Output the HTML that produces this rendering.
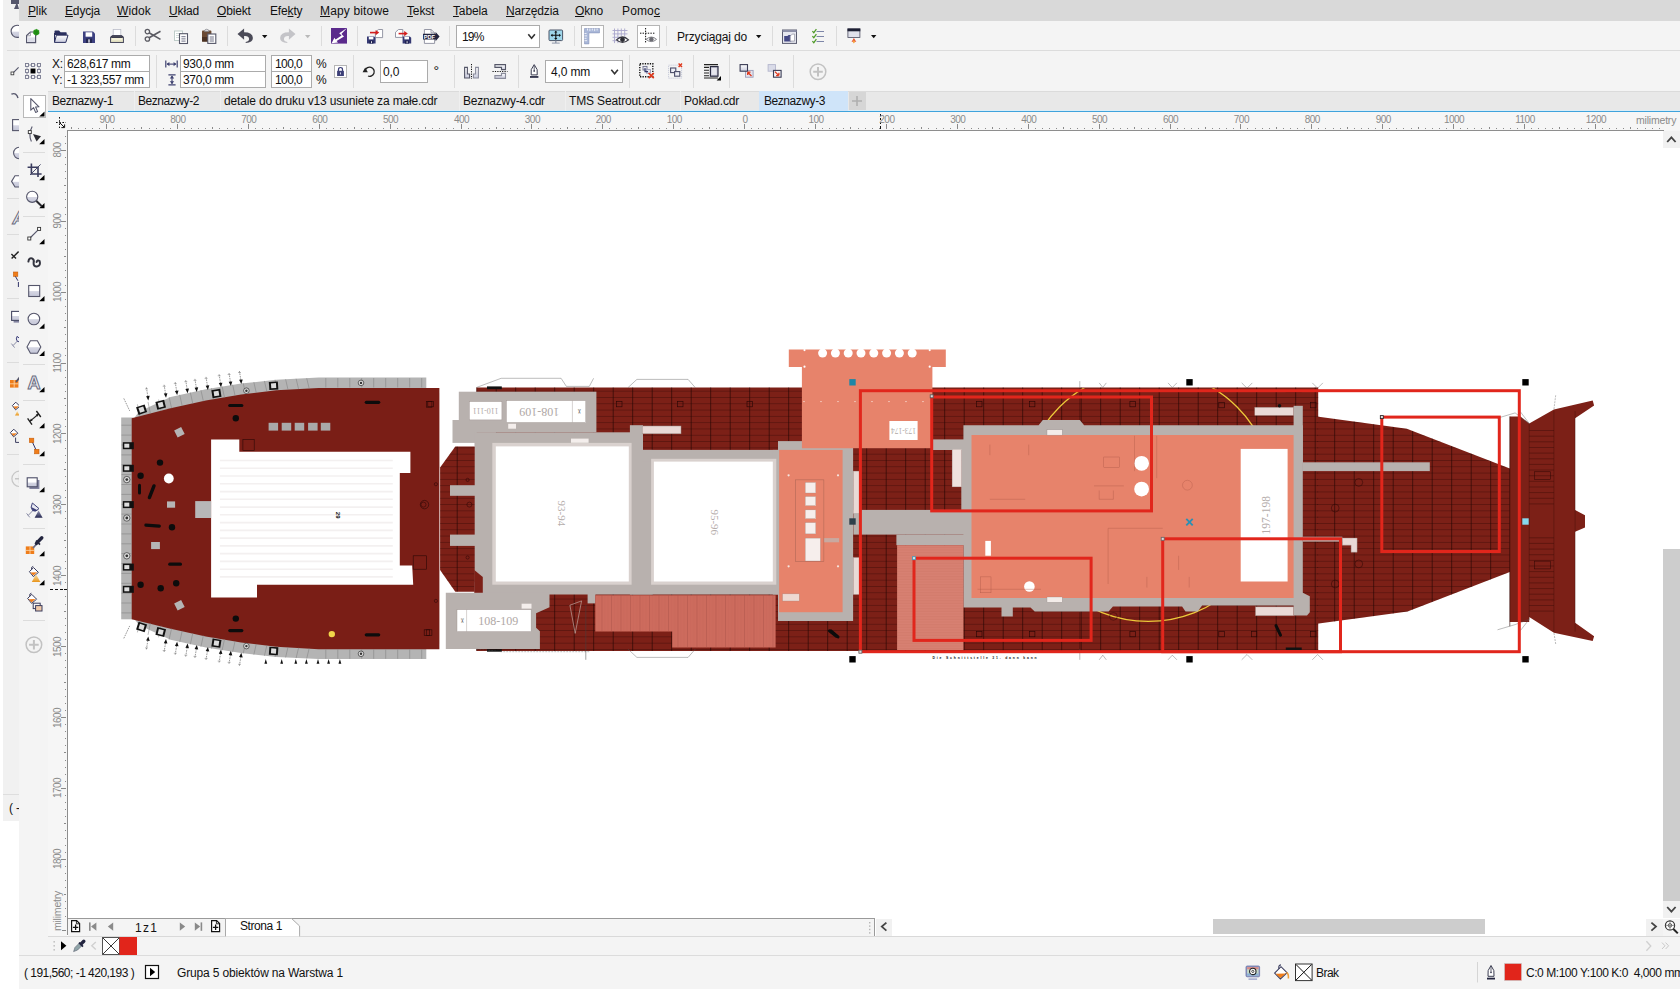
<!DOCTYPE html>
<html lang="pl">
<head>
<meta charset="utf-8">
<title>CorelDRAW - Beznazwy-3</title>
<style>
html,body{margin:0;padding:0;}
body{width:1680px;height:992px;overflow:hidden;background:#fff;position:relative;
 font-family:"Liberation Sans",sans-serif;font-size:12px;color:#111;}
.abs{position:absolute;}
.t{position:absolute;white-space:nowrap;line-height:14px;height:14px;letter-spacing:-0.15px;}
.box{position:absolute;background:#fff;border:1px solid #ababab;box-sizing:border-box;}
.vsep{position:absolute;width:1px;background:#dcdcdc;}
.hsep{position:absolute;height:1px;background:#dcdcdc;}
.rl{position:absolute;font-size:10px;color:#8a8a8a;line-height:10px;letter-spacing:-0.55px;}
svg{position:absolute;overflow:visible;}
u{text-decoration:underline;text-underline-offset:1px;}
</style>
</head>
<body>
<!-- left background strip (window behind) -->
<div class="abs" style="left:3px;top:0;width:16px;height:821px;background:#f1f1f1;"></div>
<div class="abs" style="left:3px;top:794px;width:16px;height:1px;background:#dedede;"></div>
<div class="t" style="left:9px;top:801px;">( -</div>

<!-- menu bar -->
<div class="abs" style="left:19px;top:0;width:1661px;height:21px;background:#d9d9d9;"></div>
<!-- toolbars bg -->
<div class="abs" style="left:19px;top:21px;width:1661px;height:70px;background:#f4f4f4;"></div>
<div class="hsep" style="left:19px;top:50px;width:1661px;"></div>
<!-- toolbox bg -->
<div class="abs" style="left:19px;top:91px;width:29px;height:898px;background:#f4f4f4;"></div>
<!-- tab strip -->
<div class="abs" style="left:48px;top:91px;width:1632px;height:20px;background:#e8e8e8;border-top:1px solid #dbdbdb;box-sizing:border-box;"></div>
<div class="abs" style="left:48px;top:110px;width:1632px;height:1px;background:#d9edf7;"></div>
<div class="abs" style="left:48px;top:111px;width:1632px;height:1px;background:#3fa3dc;"></div>
<!-- rulers -->
<div class="abs" style="left:48px;top:112px;width:1632px;height:19px;background:#f6f6f6;"></div>
<div class="abs" style="left:48px;top:112px;width:20px;height:806px;background:#f6f6f6;"></div>
<!-- canvas -->
<div class="abs" style="left:67px;top:130px;width:1597px;height:789px;background:#fff;border-left:1px solid #8e8e8e;border-top:1px solid #8e8e8e;box-sizing:border-box;"></div>
<div class="abs" style="left:67px;top:918px;width:808px;height:1px;background:#9a9a9a;"></div>
<!-- right scrollbar -->
<div class="abs" style="left:1663px;top:131px;width:17px;height:787px;background:#fff;"></div>
<div class="abs" style="left:1663px;top:549px;width:17px;height:352px;background:#cdcdcd;"></div>
<div class="abs" style="left:1663px;top:131px;width:17px;height:17px;background:#f1f1f1;"></div>
<div class="abs" style="left:1663px;top:901px;width:17px;height:17px;background:#f1f1f1;"></div>
<!-- bottom nav bar -->
<div class="abs" style="left:48px;top:919px;width:1632px;height:17px;background:#fff;"></div>
<div class="abs" style="left:68px;top:919px;width:806px;height:17px;background:#f4f4f4;"></div>
<div class="abs" style="left:48px;top:918px;width:19px;height:18px;background:#f6f6f6;"></div><div class="abs" style="left:67px;top:918px;width:1px;height:17px;background:#8e8e8e;"></div><div class="abs" style="left:62px;top:930px;width:4px;height:1px;background:#8a8a8a;"></div>
<div class="abs" style="left:874px;top:919px;width:1px;height:17px;background:#9a9a9a;"></div>
<div class="abs" style="left:876px;top:919px;width:16px;height:17px;background:#f1f1f1;"></div>
<div class="abs" style="left:1213px;top:919px;width:272px;height:15px;background:#cdcdcd;"></div>
<div class="abs" style="left:1646px;top:919px;width:17px;height:17px;background:#f1f1f1;"></div>
<div class="abs" style="left:1663px;top:919px;width:17px;height:17px;background:#f4f4f4;"></div>
<div class="abs" style="left:48px;top:936px;width:1632px;height:1px;background:#d9d9d9;"></div>
<!-- palette row -->
<div class="abs" style="left:48px;top:937px;width:1632px;height:18px;background:#f4f4f4;"></div>
<div class="abs" style="left:19px;top:955px;width:1661px;height:1px;background:#dcdcdc;"></div>
<!-- status bar -->
<div class="abs" style="left:19px;top:956px;width:1661px;height:33px;background:#f4f4f4;"></div>
<!-- menu items -->
<div class="t" style="left:28px;top:4px;"><u>P</u>lik</div>
<div class="t" style="left:65px;top:4px;"><u>E</u>dycja</div>
<div class="t" style="letter-spacing:0.13px;left:117px;top:4px;"><u>W</u>idok</div>
<div class="t" style="left:169px;top:4px;"><u>U</u>kład</div>
<div class="t" style="left:217px;top:4px;"><u>O</u>biekt</div>
<div class="t" style="left:270px;top:4px;">Efe<u>k</u>ty</div>
<div class="t" style="letter-spacing:0.15px;left:320px;top:4px;"><u>M</u>apy bitowe</div>
<div class="t" style="left:407px;top:4px;"><u>T</u>ekst</div>
<div class="t" style="left:453px;top:4px;"><u>T</u>abela</div>
<div class="t" style="left:506px;top:4px;"><u>N</u>arzędzia</div>
<div class="t" style="left:575px;top:4px;"><u>O</u>kno</div>
<div class="t" style="letter-spacing:0.13px;left:622px;top:4px;">Pomo<u>c</u></div>

<!-- tabs -->
<div class="abs" style="left:759px;top:91px;width:89px;height:20px;background:#cfe4f9;"></div>
<div class="abs" style="left:849px;top:92px;width:17px;height:18px;background:#d6d6d6;"></div>
<div class="vsep" style="left:134px;top:91px;height:20px;background:#efefef;"></div>
<div class="vsep" style="left:220px;top:91px;height:20px;background:#efefef;"></div>
<div class="vsep" style="left:459px;top:91px;height:20px;background:#efefef;"></div>
<div class="vsep" style="left:565px;top:91px;height:20px;background:#efefef;"></div>
<div class="vsep" style="left:680px;top:91px;height:20px;background:#efefef;"></div>
<div class="t" id="tab1" style="letter-spacing:-0.44px;left:52px;top:94px;">Beznazwy-1</div>
<div class="t" id="tab2" style="letter-spacing:-0.44px;left:138px;top:94px;">Beznazwy-2</div>
<div class="t" id="tab3" style="left:224px;top:94px;">detale do druku v13 usuniete za małe.cdr</div>
<div class="t" id="tab4" style="letter-spacing:-0.25px;left:463px;top:94px;">Beznazwy-4.cdr</div>
<div class="t" id="tab5" style="left:569px;top:94px;">TMS Seatrout.cdr</div>
<div class="t" id="tab6" style="left:684px;top:94px;">Pokład.cdr</div>
<div class="t" id="tab7" style="letter-spacing:-0.44px;left:764px;top:94px;">Beznazwy-3</div>

<!-- standard toolbar widgets -->
<div class="box" style="left:456px;top:25px;width:84px;height:23px;"></div>
<div class="t" style="letter-spacing:-0.85px;left:462px;top:30px;">19%</div>
<div class="t" style="left:677px;top:30px;">Przyciągaj do</div>

<!-- property bar -->
<div class="t" style="left:52px;top:57px;">X:</div>
<div class="t" style="left:52px;top:73px;">Y:</div>
<div class="box" style="left:64px;top:55px;width:86px;height:17px;"></div>
<div class="box" style="left:64px;top:71px;width:86px;height:17px;"></div>
<div class="t" style="letter-spacing:-0.33px;left:67px;top:57px;">628,617 mm</div>
<div class="t" style="letter-spacing:-0.3px;left:67px;top:73px;">-1 323,557 mm</div>
<div class="box" style="left:180px;top:55px;width:86px;height:17px;"></div>
<div class="box" style="left:180px;top:71px;width:86px;height:17px;"></div>
<div class="t" style="letter-spacing:-0.33px;left:183px;top:57px;">930,0 mm</div>
<div class="t" style="letter-spacing:-0.33px;left:183px;top:73px;">370,0 mm</div>
<div class="box" style="left:271px;top:55px;width:41px;height:17px;"></div>
<div class="box" style="left:271px;top:71px;width:41px;height:17px;"></div>
<div class="t" style="letter-spacing:-0.6px;left:275px;top:57px;">100,0</div>
<div class="t" style="letter-spacing:-0.6px;left:275px;top:73px;">100,0</div>
<div class="t" style="left:316px;top:57px;">%</div>
<div class="t" style="left:316px;top:73px;">%</div>
<div class="box" style="left:380px;top:60px;width:48px;height:23px;"></div>
<div class="t" style="left:383px;top:65px;">0,0</div>
<div class="t" style="left:433.5px;top:64px;font-size:14px;">°</div>
<div class="box" style="left:545px;top:60px;width:78px;height:23px;"></div>
<div class="t" style="left:551px;top:65px;">4,0 mm</div>


<!-- status bar -->
<div class="t" style="letter-spacing:-0.52px;left:24px;top:966px;">( 191,560; -1 420,193 )</div>
<div class="t" style="left:177px;top:966px;">Grupa 5 obiektów na Warstwa 1</div>
<div class="t" style="letter-spacing:-0.55px;left:1316px;top:966px;">Brak</div>
<div class="t" style="letter-spacing:-0.45px;left:1526px;top:966px;">C:0 M:100 Y:100 K:0&nbsp; 4,000 mm</div>
<!-- rulers -->
<svg width="1680" height="992" style="left:0;top:0" shape-rendering="crispEdges">
<g fill="#8a8a8a"><rect x="71" y="127" width="1" height="2"/><rect x="78" y="128" width="1" height="1"/><rect x="85" y="128" width="1" height="1"/><rect x="92" y="128" width="1" height="1"/><rect x="99" y="128" width="1" height="1"/><rect x="106" y="124" width="1" height="5"/><rect x="113" y="128" width="1" height="1"/><rect x="120" y="128" width="1" height="1"/><rect x="127" y="128" width="1" height="1"/><rect x="134" y="128" width="1" height="1"/><rect x="141" y="127" width="1" height="2"/><rect x="149" y="128" width="1" height="1"/><rect x="156" y="128" width="1" height="1"/><rect x="163" y="128" width="1" height="1"/><rect x="170" y="128" width="1" height="1"/><rect x="177" y="124" width="1" height="5"/><rect x="184" y="128" width="1" height="1"/><rect x="191" y="128" width="1" height="1"/><rect x="198" y="128" width="1" height="1"/><rect x="205" y="128" width="1" height="1"/><rect x="212" y="127" width="1" height="2"/><rect x="219" y="128" width="1" height="1"/><rect x="227" y="128" width="1" height="1"/><rect x="234" y="128" width="1" height="1"/><rect x="241" y="128" width="1" height="1"/><rect x="248" y="124" width="1" height="5"/><rect x="255" y="128" width="1" height="1"/><rect x="262" y="128" width="1" height="1"/><rect x="269" y="128" width="1" height="1"/><rect x="276" y="128" width="1" height="1"/><rect x="283" y="127" width="1" height="2"/><rect x="290" y="128" width="1" height="1"/><rect x="297" y="128" width="1" height="1"/><rect x="305" y="128" width="1" height="1"/><rect x="312" y="128" width="1" height="1"/><rect x="319" y="124" width="1" height="5"/><rect x="326" y="128" width="1" height="1"/><rect x="333" y="128" width="1" height="1"/><rect x="340" y="128" width="1" height="1"/><rect x="347" y="128" width="1" height="1"/><rect x="354" y="127" width="1" height="2"/><rect x="361" y="128" width="1" height="1"/><rect x="368" y="128" width="1" height="1"/><rect x="375" y="128" width="1" height="1"/><rect x="383" y="128" width="1" height="1"/><rect x="390" y="124" width="1" height="5"/><rect x="397" y="128" width="1" height="1"/><rect x="404" y="128" width="1" height="1"/><rect x="411" y="128" width="1" height="1"/><rect x="418" y="128" width="1" height="1"/><rect x="425" y="127" width="1" height="2"/><rect x="432" y="128" width="1" height="1"/><rect x="439" y="128" width="1" height="1"/><rect x="446" y="128" width="1" height="1"/><rect x="453" y="128" width="1" height="1"/><rect x="461" y="124" width="1" height="5"/><rect x="468" y="128" width="1" height="1"/><rect x="475" y="128" width="1" height="1"/><rect x="482" y="128" width="1" height="1"/><rect x="489" y="128" width="1" height="1"/><rect x="496" y="127" width="1" height="2"/><rect x="503" y="128" width="1" height="1"/><rect x="510" y="128" width="1" height="1"/><rect x="517" y="128" width="1" height="1"/><rect x="524" y="128" width="1" height="1"/><rect x="531" y="124" width="1" height="5"/><rect x="538" y="128" width="1" height="1"/><rect x="546" y="128" width="1" height="1"/><rect x="553" y="128" width="1" height="1"/><rect x="560" y="128" width="1" height="1"/><rect x="567" y="127" width="1" height="2"/><rect x="574" y="128" width="1" height="1"/><rect x="581" y="128" width="1" height="1"/><rect x="588" y="128" width="1" height="1"/><rect x="595" y="128" width="1" height="1"/><rect x="602" y="124" width="1" height="5"/><rect x="609" y="128" width="1" height="1"/><rect x="616" y="128" width="1" height="1"/><rect x="624" y="128" width="1" height="1"/><rect x="631" y="128" width="1" height="1"/><rect x="638" y="127" width="1" height="2"/><rect x="645" y="128" width="1" height="1"/><rect x="652" y="128" width="1" height="1"/><rect x="659" y="128" width="1" height="1"/><rect x="666" y="128" width="1" height="1"/><rect x="673" y="124" width="1" height="5"/><rect x="680" y="128" width="1" height="1"/><rect x="687" y="128" width="1" height="1"/><rect x="694" y="128" width="1" height="1"/><rect x="702" y="128" width="1" height="1"/><rect x="709" y="127" width="1" height="2"/><rect x="716" y="128" width="1" height="1"/><rect x="723" y="128" width="1" height="1"/><rect x="730" y="128" width="1" height="1"/><rect x="737" y="128" width="1" height="1"/><rect x="744" y="124" width="1" height="5"/><rect x="751" y="128" width="1" height="1"/><rect x="758" y="128" width="1" height="1"/><rect x="765" y="128" width="1" height="1"/><rect x="772" y="128" width="1" height="1"/><rect x="780" y="127" width="1" height="2"/><rect x="787" y="128" width="1" height="1"/><rect x="794" y="128" width="1" height="1"/><rect x="801" y="128" width="1" height="1"/><rect x="808" y="128" width="1" height="1"/><rect x="815" y="124" width="1" height="5"/><rect x="822" y="128" width="1" height="1"/><rect x="829" y="128" width="1" height="1"/><rect x="836" y="128" width="1" height="1"/><rect x="843" y="128" width="1" height="1"/><rect x="850" y="127" width="1" height="2"/><rect x="858" y="128" width="1" height="1"/><rect x="865" y="128" width="1" height="1"/><rect x="872" y="128" width="1" height="1"/><rect x="879" y="128" width="1" height="1"/><rect x="886" y="124" width="1" height="5"/><rect x="893" y="128" width="1" height="1"/><rect x="900" y="128" width="1" height="1"/><rect x="907" y="128" width="1" height="1"/><rect x="914" y="128" width="1" height="1"/><rect x="921" y="127" width="1" height="2"/><rect x="928" y="128" width="1" height="1"/><rect x="936" y="128" width="1" height="1"/><rect x="943" y="128" width="1" height="1"/><rect x="950" y="128" width="1" height="1"/><rect x="957" y="124" width="1" height="5"/><rect x="964" y="128" width="1" height="1"/><rect x="971" y="128" width="1" height="1"/><rect x="978" y="128" width="1" height="1"/><rect x="985" y="128" width="1" height="1"/><rect x="992" y="127" width="1" height="2"/><rect x="999" y="128" width="1" height="1"/><rect x="1006" y="128" width="1" height="1"/><rect x="1014" y="128" width="1" height="1"/><rect x="1021" y="128" width="1" height="1"/><rect x="1028" y="124" width="1" height="5"/><rect x="1035" y="128" width="1" height="1"/><rect x="1042" y="128" width="1" height="1"/><rect x="1049" y="128" width="1" height="1"/><rect x="1056" y="128" width="1" height="1"/><rect x="1063" y="127" width="1" height="2"/><rect x="1070" y="128" width="1" height="1"/><rect x="1077" y="128" width="1" height="1"/><rect x="1084" y="128" width="1" height="1"/><rect x="1092" y="128" width="1" height="1"/><rect x="1099" y="124" width="1" height="5"/><rect x="1106" y="128" width="1" height="1"/><rect x="1113" y="128" width="1" height="1"/><rect x="1120" y="128" width="1" height="1"/><rect x="1127" y="128" width="1" height="1"/><rect x="1134" y="127" width="1" height="2"/><rect x="1141" y="128" width="1" height="1"/><rect x="1148" y="128" width="1" height="1"/><rect x="1155" y="128" width="1" height="1"/><rect x="1162" y="128" width="1" height="1"/><rect x="1170" y="124" width="1" height="5"/><rect x="1177" y="128" width="1" height="1"/><rect x="1184" y="128" width="1" height="1"/><rect x="1191" y="128" width="1" height="1"/><rect x="1198" y="128" width="1" height="1"/><rect x="1205" y="127" width="1" height="2"/><rect x="1212" y="128" width="1" height="1"/><rect x="1219" y="128" width="1" height="1"/><rect x="1226" y="128" width="1" height="1"/><rect x="1233" y="128" width="1" height="1"/><rect x="1240" y="124" width="1" height="5"/><rect x="1247" y="128" width="1" height="1"/><rect x="1255" y="128" width="1" height="1"/><rect x="1262" y="128" width="1" height="1"/><rect x="1269" y="128" width="1" height="1"/><rect x="1276" y="127" width="1" height="2"/><rect x="1283" y="128" width="1" height="1"/><rect x="1290" y="128" width="1" height="1"/><rect x="1297" y="128" width="1" height="1"/><rect x="1304" y="128" width="1" height="1"/><rect x="1311" y="124" width="1" height="5"/><rect x="1318" y="128" width="1" height="1"/><rect x="1325" y="128" width="1" height="1"/><rect x="1333" y="128" width="1" height="1"/><rect x="1340" y="128" width="1" height="1"/><rect x="1347" y="127" width="1" height="2"/><rect x="1354" y="128" width="1" height="1"/><rect x="1361" y="128" width="1" height="1"/><rect x="1368" y="128" width="1" height="1"/><rect x="1375" y="128" width="1" height="1"/><rect x="1382" y="124" width="1" height="5"/><rect x="1389" y="128" width="1" height="1"/><rect x="1396" y="128" width="1" height="1"/><rect x="1403" y="128" width="1" height="1"/><rect x="1411" y="128" width="1" height="1"/><rect x="1418" y="127" width="1" height="2"/><rect x="1425" y="128" width="1" height="1"/><rect x="1432" y="128" width="1" height="1"/><rect x="1439" y="128" width="1" height="1"/><rect x="1446" y="128" width="1" height="1"/><rect x="1453" y="124" width="1" height="5"/><rect x="1460" y="128" width="1" height="1"/><rect x="1467" y="128" width="1" height="1"/><rect x="1474" y="128" width="1" height="1"/><rect x="1481" y="128" width="1" height="1"/><rect x="1489" y="127" width="1" height="2"/><rect x="1496" y="128" width="1" height="1"/><rect x="1503" y="128" width="1" height="1"/><rect x="1510" y="128" width="1" height="1"/><rect x="1517" y="128" width="1" height="1"/><rect x="1524" y="124" width="1" height="5"/><rect x="1531" y="128" width="1" height="1"/><rect x="1538" y="128" width="1" height="1"/><rect x="1545" y="128" width="1" height="1"/><rect x="1552" y="128" width="1" height="1"/><rect x="1559" y="127" width="1" height="2"/><rect x="1567" y="128" width="1" height="1"/><rect x="1574" y="128" width="1" height="1"/><rect x="1581" y="128" width="1" height="1"/><rect x="1588" y="128" width="1" height="1"/><rect x="1595" y="124" width="1" height="5"/><rect x="1602" y="128" width="1" height="1"/><rect x="1609" y="128" width="1" height="1"/><rect x="1616" y="128" width="1" height="1"/><rect x="1623" y="128" width="1" height="1"/><rect x="1630" y="127" width="1" height="2"/><rect x="1637" y="128" width="1" height="1"/><rect x="1645" y="128" width="1" height="1"/><rect x="1652" y="128" width="1" height="1"/><rect x="1659" y="128" width="1" height="1"/><rect x="65" y="136" width="1" height="1"/><rect x="65" y="143" width="1" height="1"/><rect x="61" y="150" width="5" height="1"/><rect x="65" y="157" width="1" height="1"/><rect x="65" y="164" width="1" height="1"/><rect x="65" y="171" width="1" height="1"/><rect x="65" y="178" width="1" height="1"/><rect x="64" y="185" width="2" height="1"/><rect x="65" y="192" width="1" height="1"/><rect x="65" y="199" width="1" height="1"/><rect x="65" y="207" width="1" height="1"/><rect x="65" y="214" width="1" height="1"/><rect x="61" y="221" width="5" height="1"/><rect x="65" y="228" width="1" height="1"/><rect x="65" y="235" width="1" height="1"/><rect x="65" y="242" width="1" height="1"/><rect x="65" y="249" width="1" height="1"/><rect x="64" y="256" width="2" height="1"/><rect x="65" y="263" width="1" height="1"/><rect x="65" y="270" width="1" height="1"/><rect x="65" y="277" width="1" height="1"/><rect x="65" y="285" width="1" height="1"/><rect x="61" y="292" width="5" height="1"/><rect x="65" y="299" width="1" height="1"/><rect x="65" y="306" width="1" height="1"/><rect x="65" y="313" width="1" height="1"/><rect x="65" y="320" width="1" height="1"/><rect x="64" y="327" width="2" height="1"/><rect x="65" y="334" width="1" height="1"/><rect x="65" y="341" width="1" height="1"/><rect x="65" y="348" width="1" height="1"/><rect x="65" y="355" width="1" height="1"/><rect x="61" y="363" width="5" height="1"/><rect x="65" y="370" width="1" height="1"/><rect x="65" y="377" width="1" height="1"/><rect x="65" y="384" width="1" height="1"/><rect x="65" y="391" width="1" height="1"/><rect x="64" y="398" width="2" height="1"/><rect x="65" y="405" width="1" height="1"/><rect x="65" y="412" width="1" height="1"/><rect x="65" y="419" width="1" height="1"/><rect x="65" y="426" width="1" height="1"/><rect x="61" y="433" width="5" height="1"/><rect x="65" y="440" width="1" height="1"/><rect x="65" y="448" width="1" height="1"/><rect x="65" y="455" width="1" height="1"/><rect x="65" y="462" width="1" height="1"/><rect x="64" y="469" width="2" height="1"/><rect x="65" y="476" width="1" height="1"/><rect x="65" y="483" width="1" height="1"/><rect x="65" y="490" width="1" height="1"/><rect x="65" y="497" width="1" height="1"/><rect x="61" y="504" width="5" height="1"/><rect x="65" y="511" width="1" height="1"/><rect x="65" y="518" width="1" height="1"/><rect x="65" y="526" width="1" height="1"/><rect x="65" y="533" width="1" height="1"/><rect x="64" y="540" width="2" height="1"/><rect x="65" y="547" width="1" height="1"/><rect x="65" y="554" width="1" height="1"/><rect x="65" y="561" width="1" height="1"/><rect x="65" y="568" width="1" height="1"/><rect x="61" y="575" width="5" height="1"/><rect x="65" y="582" width="1" height="1"/><rect x="65" y="589" width="1" height="1"/><rect x="65" y="596" width="1" height="1"/><rect x="65" y="604" width="1" height="1"/><rect x="64" y="611" width="2" height="1"/><rect x="65" y="618" width="1" height="1"/><rect x="65" y="625" width="1" height="1"/><rect x="65" y="632" width="1" height="1"/><rect x="65" y="639" width="1" height="1"/><rect x="61" y="646" width="5" height="1"/><rect x="65" y="653" width="1" height="1"/><rect x="65" y="660" width="1" height="1"/><rect x="65" y="667" width="1" height="1"/><rect x="65" y="674" width="1" height="1"/><rect x="64" y="682" width="2" height="1"/><rect x="65" y="689" width="1" height="1"/><rect x="65" y="696" width="1" height="1"/><rect x="65" y="703" width="1" height="1"/><rect x="65" y="710" width="1" height="1"/><rect x="61" y="717" width="5" height="1"/><rect x="65" y="724" width="1" height="1"/><rect x="65" y="731" width="1" height="1"/><rect x="65" y="738" width="1" height="1"/><rect x="65" y="745" width="1" height="1"/><rect x="64" y="752" width="2" height="1"/><rect x="65" y="760" width="1" height="1"/><rect x="65" y="767" width="1" height="1"/><rect x="65" y="774" width="1" height="1"/><rect x="65" y="781" width="1" height="1"/><rect x="61" y="788" width="5" height="1"/><rect x="65" y="795" width="1" height="1"/><rect x="65" y="802" width="1" height="1"/><rect x="65" y="809" width="1" height="1"/><rect x="65" y="816" width="1" height="1"/><rect x="64" y="823" width="2" height="1"/><rect x="65" y="830" width="1" height="1"/><rect x="65" y="838" width="1" height="1"/><rect x="65" y="845" width="1" height="1"/><rect x="65" y="852" width="1" height="1"/><rect x="61" y="859" width="5" height="1"/><rect x="65" y="866" width="1" height="1"/><rect x="65" y="873" width="1" height="1"/><rect x="65" y="880" width="1" height="1"/><rect x="65" y="887" width="1" height="1"/><rect x="64" y="894" width="2" height="1"/><rect x="65" y="901" width="1" height="1"/><rect x="65" y="908" width="1" height="1"/><rect x="65" y="916" width="1" height="1"/></g>
<g fill="#111"><rect x="880" y="114" width="1" height="2"/><rect x="880" y="118" width="1" height="2"/><rect x="880" y="122" width="1" height="2"/><rect x="880" y="126" width="1" height="3"/>
<rect x="50" y="589" width="3" height="1"/><rect x="55" y="589" width="3" height="1"/><rect x="60" y="589" width="3" height="1"/><rect x="64" y="589" width="3" height="1"/></g>
</svg>
<div class="rl" style="left:87.0px;top:114.6px;width:40px;text-align:center;">900</div>
<div class="rl" style="left:157.9px;top:114.6px;width:40px;text-align:center;">800</div>
<div class="rl" style="left:228.8px;top:114.6px;width:40px;text-align:center;">700</div>
<div class="rl" style="left:299.7px;top:114.6px;width:40px;text-align:center;">600</div>
<div class="rl" style="left:370.6px;top:114.6px;width:40px;text-align:center;">500</div>
<div class="rl" style="left:441.5px;top:114.6px;width:40px;text-align:center;">400</div>
<div class="rl" style="left:512.4px;top:114.6px;width:40px;text-align:center;">300</div>
<div class="rl" style="left:583.3px;top:114.6px;width:40px;text-align:center;">200</div>
<div class="rl" style="left:654.2px;top:114.6px;width:40px;text-align:center;">100</div>
<div class="rl" style="left:725.1px;top:114.6px;width:40px;text-align:center;">0</div>
<div class="rl" style="left:796.0px;top:114.6px;width:40px;text-align:center;">100</div>
<div class="rl" style="left:866.9px;top:114.6px;width:40px;text-align:center;">200</div>
<div class="rl" style="left:937.8px;top:114.6px;width:40px;text-align:center;">300</div>
<div class="rl" style="left:1008.7px;top:114.6px;width:40px;text-align:center;">400</div>
<div class="rl" style="left:1079.6px;top:114.6px;width:40px;text-align:center;">500</div>
<div class="rl" style="left:1150.5px;top:114.6px;width:40px;text-align:center;">600</div>
<div class="rl" style="left:1221.4px;top:114.6px;width:40px;text-align:center;">700</div>
<div class="rl" style="left:1292.3px;top:114.6px;width:40px;text-align:center;">800</div>
<div class="rl" style="left:1363.2px;top:114.6px;width:40px;text-align:center;">900</div>
<div class="rl" style="left:1434.1px;top:114.6px;width:40px;text-align:center;">1000</div>
<div class="rl" style="left:1505.0px;top:114.6px;width:40px;text-align:center;">1100</div>
<div class="rl" style="left:1575.9px;top:114.6px;width:40px;text-align:center;">1200</div>
<div class="rl" style="left:1636px;top:115px;font-size:10.5px;letter-spacing:-0.2px;">milimetry</div>
<div class="rl" style="left:37.5px;top:145.3px;width:40px;text-align:center;transform:rotate(-90deg);">800</div>
<div class="rl" style="left:37.5px;top:216.2px;width:40px;text-align:center;transform:rotate(-90deg);">900</div>
<div class="rl" style="left:37.5px;top:287.1px;width:40px;text-align:center;transform:rotate(-90deg);">1000</div>
<div class="rl" style="left:37.5px;top:358.0px;width:40px;text-align:center;transform:rotate(-90deg);">1100</div>
<div class="rl" style="left:37.5px;top:428.9px;width:40px;text-align:center;transform:rotate(-90deg);">1200</div>
<div class="rl" style="left:37.5px;top:499.8px;width:40px;text-align:center;transform:rotate(-90deg);">1300</div>
<div class="rl" style="left:37.5px;top:570.7px;width:40px;text-align:center;transform:rotate(-90deg);">1400</div>
<div class="rl" style="left:37.5px;top:641.6px;width:40px;text-align:center;transform:rotate(-90deg);">1500</div>
<div class="rl" style="left:37.5px;top:712.5px;width:40px;text-align:center;transform:rotate(-90deg);">1600</div>
<div class="rl" style="left:37.5px;top:783.4px;width:40px;text-align:center;transform:rotate(-90deg);">1700</div>
<div class="rl" style="left:37.5px;top:854.3px;width:40px;text-align:center;transform:rotate(-90deg);">1800</div>
<div class="rl" style="left:31.5px;top:906px;width:50px;text-align:center;transform:rotate(-90deg);font-size:10.5px;letter-spacing:-0.2px;">milimetry</div>
<!-- ship artwork -->
<svg width="1680" height="992" style="left:0;top:0" viewBox="0 0 1680 992">
<defs>
<pattern id="plk" width="19.5" height="6.3" patternUnits="userSpaceOnUse" x="866.2" y="390.7"><path d="M0 0.4H19.5" stroke="#2a0503" stroke-width="0.8" fill="none" opacity="0.45"/><path d="M0.4 0V6.3" stroke="#1e0302" stroke-width="0.8" fill="none" opacity="0.8"/></pattern>
<pattern id="plk2" width="9.5" height="10" patternUnits="userSpaceOnUse" x="3"><path d="M0.5 0V10" stroke="#a04a40" stroke-width="0.6" opacity="0.6"/><path d="M3.6 0V10M6.7 0V10" stroke="#b85c50" stroke-width="0.5" opacity="0.35"/></pattern>
<pattern id="tex" width="2" height="2" patternUnits="userSpaceOnUse"><rect width="1" height="1" fill="#fff" opacity="0.18"/><rect x="1" y="1" width="1" height="1" fill="#fff" opacity="0.18"/></pattern>
<pattern id="plk3" width="10" height="1.6" patternUnits="userSpaceOnUse"><path d="M0 0.5H10" stroke="#b85c50" stroke-width="0.5" opacity="0.4"/></pattern>
</defs>
<g id="L-base"><polygon points="138.8,411.8 170.6,397 205.8,389.3 241.1,383.6 276.4,379.7 318.7,377.6 426.3,377.6 426.3,390 318.7,390 131.7,421.7" fill="#b4b4b4"/>
<polygon points="138.8,624.9 170.6,639.7 205.8,647.5 241.1,653.1 276.4,657 318.7,659.1 426.3,659.1 426.3,646.8 318.7,646.8 131.7,615" fill="#b4b4b4"/>
<rect x="121.2" y="417.5" width="12.3" height="201.8" fill="#b4b4b4"/>
<polygon points="131.7,418.2 170.6,408.3 205.8,400.6 241.1,394.6 276.4,390.3 318.7,387.9 439.4,387.9 439.4,649.2 318.7,649.2 276.4,646.8 241.1,642.5 205.8,636.5 170.6,628.8 131.7,619.3" fill="#7a1e16"/>
<polygon points="455.3,446.4 440.1,467.6 440.1,569.9 455.3,591.7 480,591.7 480,446.4" fill="#7c2017"/>
<rect x="476.4" y="387.5" width="841.8" height="263.5" fill="#7c2017"/>
<polygon points="1316.9,416.4 1406.8,428.8 1509.8,468.6 1509.8,416.4 1520.4,416.4 1529.2,423.5 1553.9,409.4 1592.7,400.6 1594.1,405.5 1575.1,418.2 1575.1,509.9 1585,515.2 1585,527.5 1575.1,531.8 1575.1,622.8 1594.1,636.2 1592.7,641.1 1553.9,632.7 1529.2,617.1 1529.2,622.1 1509.8,622.1 1509.8,572 1407.5,611.5 1316.9,623.8" fill="#7c2017"/></g>
<g id="L-planks"><rect x="476.4" y="387.5" width="841.8" height="263.5" fill="url(#plk)"/>
<rect x="440.1" y="446.4" width="39.9" height="145.3" fill="url(#plk)" clip-path="polygon(38% 0,0 15%,0 85%,38% 100%,100% 100%,100% 0)"/>
<clipPath id="cpT"><polygon points="1316.9,416.4 1406.8,428.8 1509.8,468.6 1509.8,572 1407.5,611.5 1316.9,623.8"/></clipPath>
<rect x="1316.9" y="416.4" width="193" height="209.9" fill="url(#plk)" clip-path="url(#cpT)"/>
<polyline points="1529.2,430.5 1553.9,430.5" fill="none" stroke="#2a0604" stroke-width="0.5" opacity="0.7"/>
<polyline points="1529.2,436.2 1553.9,436.2" fill="none" stroke="#2a0604" stroke-width="0.5" opacity="0.7"/>
<polyline points="1529.2,441.8 1553.9,441.8" fill="none" stroke="#2a0604" stroke-width="0.5" opacity="0.7"/>
<polyline points="1529.2,447.5 1553.9,447.5" fill="none" stroke="#2a0604" stroke-width="0.5" opacity="0.7"/>
<polyline points="1529.2,453.1 1553.9,453.1" fill="none" stroke="#2a0604" stroke-width="0.5" opacity="0.7"/>
<polyline points="1529.2,458.8 1553.9,458.8" fill="none" stroke="#2a0604" stroke-width="0.5" opacity="0.7"/>
<polyline points="1529.2,464.4 1553.9,464.4" fill="none" stroke="#2a0604" stroke-width="0.5" opacity="0.7"/>
<polyline points="1529.2,470 1553.9,470" fill="none" stroke="#2a0604" stroke-width="0.5" opacity="0.7"/>
<polyline points="1529.2,475.7 1553.9,475.7" fill="none" stroke="#2a0604" stroke-width="0.5" opacity="0.7"/>
<polyline points="1529.2,481.3 1553.9,481.3" fill="none" stroke="#2a0604" stroke-width="0.5" opacity="0.7"/>
<polyline points="1529.2,487 1553.9,487" fill="none" stroke="#2a0604" stroke-width="0.5" opacity="0.7"/>
<polyline points="1529.2,492.6 1553.9,492.6" fill="none" stroke="#2a0604" stroke-width="0.5" opacity="0.7"/>
<polyline points="1529.2,498.3 1553.9,498.3" fill="none" stroke="#2a0604" stroke-width="0.5" opacity="0.7"/>
<polyline points="1529.2,503.9 1553.9,503.9" fill="none" stroke="#2a0604" stroke-width="0.5" opacity="0.7"/>
<polyline points="1529.2,537.8 1553.9,537.8" fill="none" stroke="#2a0604" stroke-width="0.5" opacity="0.7"/>
<polyline points="1529.2,543.4 1553.9,543.4" fill="none" stroke="#2a0604" stroke-width="0.5" opacity="0.7"/>
<polyline points="1529.2,549.1 1553.9,549.1" fill="none" stroke="#2a0604" stroke-width="0.5" opacity="0.7"/>
<polyline points="1529.2,554.7 1553.9,554.7" fill="none" stroke="#2a0604" stroke-width="0.5" opacity="0.7"/>
<polyline points="1529.2,560.4 1553.9,560.4" fill="none" stroke="#2a0604" stroke-width="0.5" opacity="0.7"/>
<polyline points="1529.2,566 1553.9,566" fill="none" stroke="#2a0604" stroke-width="0.5" opacity="0.7"/>
<polyline points="1529.2,571.6 1553.9,571.6" fill="none" stroke="#2a0604" stroke-width="0.5" opacity="0.7"/>
<polyline points="1529.2,577.3 1553.9,577.3" fill="none" stroke="#2a0604" stroke-width="0.5" opacity="0.7"/>
<polyline points="1529.2,582.9 1553.9,582.9" fill="none" stroke="#2a0604" stroke-width="0.5" opacity="0.7"/>
<polyline points="1529.2,588.6 1553.9,588.6" fill="none" stroke="#2a0604" stroke-width="0.5" opacity="0.7"/>
<polyline points="1529.2,594.2 1553.9,594.2" fill="none" stroke="#2a0604" stroke-width="0.5" opacity="0.7"/>
<polyline points="1529.2,599.9 1553.9,599.9" fill="none" stroke="#2a0604" stroke-width="0.5" opacity="0.7"/>
<polyline points="1529.2,605.5 1553.9,605.5" fill="none" stroke="#2a0604" stroke-width="0.5" opacity="0.7"/>
<polyline points="1529.2,611.1 1553.9,611.1" fill="none" stroke="#2a0604" stroke-width="0.5" opacity="0.7"/>
<polyline points="1529.2,423.5 1529.2,619.3" fill="none" stroke="#2a0604" stroke-width="0.5" opacity="0.6"/>
<polyline points="1553.9,411.1 1553.9,631.6" fill="none" stroke="#2a0604" stroke-width="0.5" opacity="0.6"/>
<polyline points="1575.1,411.1 1575.1,631.6" fill="none" stroke="#2a0604" stroke-width="0.5" opacity="0.6"/>
<polyline points="1509.8,416.4 1509.8,626.3" fill="none" stroke="#2a0604" stroke-width="0.6"/></g>
<g id="L-arc"><clipPath id="cpA"><rect x="780" y="388.2" width="538.3" height="261"/></clipPath>
<circle cx="1148.3" cy="495.8" r="125.6" fill="none" stroke="#ecc93a" stroke-width="1.3" clip-path="url(#cpA)"/></g>
<g id="L-gray"><rect x="458.8" y="391.7" width="137.6" height="40.6" fill="#b8b1ae"/>
<rect x="452.5" y="420" width="24" height="22.9" fill="#b8b1ae"/>
<rect x="474.7" y="432.3" width="21.2" height="162.3" fill="#b8b1ae"/>
<rect x="474.7" y="432.3" width="167.6" height="14.1" fill="#b8b1ae"/>
<rect x="629.9" y="425.2" width="13.1" height="26.5" fill="#b8b1ae"/>
<rect x="629.9" y="449.9" width="22.9" height="144.6" fill="#b8b1ae"/>
<rect x="642.2" y="449.9" width="138.3" height="11.3" fill="#b8b1ae"/>
<rect x="474.7" y="582.2" width="305.8" height="12.3" fill="#b8b1ae"/>
<rect x="772.8" y="449.9" width="7.8" height="144.6" fill="#b8b1ae"/>
<rect x="450" y="485.2" width="26.5" height="10.6" fill="#b8b1ae"/>
<rect x="450" y="534.6" width="26.5" height="11.3" fill="#b8b1ae"/>
<polygon points="445.8,592.8 549.5,592.8 549.5,607.3 536.1,613.3 536.1,627.7 539.9,631.3 539.9,648.9 445.8,648.9" fill="#b8b1ae"/>
<rect x="587.6" y="592.8" width="7.8" height="10.6" fill="#b8b1ae"/>
<rect x="778" y="441.1" width="75.1" height="179.9" fill="#b8b1ae"/>
<rect x="853.4" y="509.9" width="118.9" height="24.7" fill="#b8b1ae"/>
<rect x="896.4" y="534.6" width="75.8" height="10.6" fill="#b8b1ae"/>
<rect x="932.4" y="439.4" width="39.9" height="10.6" fill="#b8b1ae"/>
<rect x="961.3" y="449.9" width="10.9" height="63.5" fill="#b8b1ae"/>
<polygon points="963.4,425.2 1038.6,425.2 1042.8,420 1079.8,420 1084.1,425.2 1302.8,425.2 1302.8,592.8 1309.8,596.3 1309.8,612.2 1307,615.4 1293.6,615.4 1293.6,605.5 1202.1,605.5 1197.7,611.5 1185.5,611.5 1182.1,606.6 1112.9,606.6 1108.6,611.5 1034.7,611.5 1030.5,607.6 1012.8,607.6 1012.8,616.4 1001.5,616.4 1001.5,607.6 963.4,607.6" fill="#b8b1ae"/>
<rect x="1293.6" y="405.8" width="9.2" height="65.3" fill="#b8b1ae"/>
<rect x="1302.8" y="462.3" width="127" height="8.8" fill="#b8b1ae"/>
<rect x="1302.8" y="536.7" width="39.5" height="4.9" fill="#b8b1ae"/></g>
<g id="L-light"><polygon points="474.3,569.9 482.8,576.9 482.8,592.8 474.3,592.8" fill="#7c2017"/>
<rect x="642.2" y="426" width="38.8" height="7.8" fill="#e9d9d6" stroke="#9c8d88" stroke-width="0.5"/>
<rect x="571" y="438.6" width="17.6" height="4.2" fill="#f4eeec"/>
<rect x="508.2" y="423.8" width="7.8" height="4.9" fill="#f4eeec"/>
<rect x="521.6" y="603.7" width="9.9" height="4.9" fill="#f4eeec"/>
<rect x="492.3" y="442.9" width="139.3" height="141.8" fill="#d9d1ce"/>
<rect x="651.1" y="458.8" width="125.2" height="125.9" fill="#d9d1ce"/>
<rect x="1254.8" y="407.3" width="38.8" height="8.1" fill="#e9d9d6" stroke="#9c8d88" stroke-width="0.4"/>
<rect x="1255.5" y="606.9" width="38.1" height="8.8" fill="#e9d9d6" stroke="#9c8d88" stroke-width="0.4"/>
<polygon points="1342.3,538.1 1357.1,538.1 1357.1,552.2 1351.1,552.2 1351.1,545.2 1342.3,545.2" fill="#e9d9d6" stroke="#9c8d88" stroke-width="0.4"/></g>
<g id="L-salmon"><polygon points="595.3,595.3 775.6,595.3 775.6,647.5 672.2,647.5 672.2,631.6 595.3,631.6" fill="#cd6b5d"/>
<polygon points="595.3,595.3 775.6,595.3 775.6,647.5 672.2,647.5 672.2,631.6 595.3,631.6" fill="url(#plk2)"/>
<rect x="779.1" y="449.9" width="63.5" height="162.3" fill="#e7836b"/>
<polygon points="788.8,349.4 945.8,349.4 945.8,367 932.4,367 932.4,448.2 801.9,448.2 801.9,367 788.8,367" fill="#e7836b"/>
<polygon points="971.5,435.1 1293.6,435.1 1293.6,598.1 971.5,598.1" fill="#e7836b"/>
<rect x="897.1" y="545.2" width="66.3" height="104.8" fill="#d98273"/>
<rect x="897.1" y="545.2" width="66.3" height="104.8" fill="url(#plk3)"/></g>
<g id="L-white"><polygon points="211.1,439.4 239.3,439.4 239.3,451.7 410.4,451.7 410.4,472.9 399.8,472.9 399.8,565.6 412.2,565.6 413.2,584.7 257,584.7 257,597.4 211.1,597.4" fill="#fff"/>
<polyline points="219.9,460.5 392.8,460.5" fill="none" stroke="#f3f0f0" stroke-width="1.6"/>
<polyline points="219.9,468.3 392.8,468.3" fill="none" stroke="#f3f0f0" stroke-width="1.6"/>
<polyline points="219.9,476 392.8,476" fill="none" stroke="#f3f0f0" stroke-width="1.6"/>
<polyline points="219.9,483.8 392.8,483.8" fill="none" stroke="#f3f0f0" stroke-width="1.6"/>
<polyline points="219.9,491.6 392.8,491.6" fill="none" stroke="#f3f0f0" stroke-width="1.6"/>
<polyline points="219.9,499.3 392.8,499.3" fill="none" stroke="#f3f0f0" stroke-width="1.6"/>
<polyline points="219.9,507.1 392.8,507.1" fill="none" stroke="#f3f0f0" stroke-width="1.6"/>
<polyline points="219.9,514.8 392.8,514.8" fill="none" stroke="#f3f0f0" stroke-width="1.6"/>
<polyline points="219.9,522.6 392.8,522.6" fill="none" stroke="#f3f0f0" stroke-width="1.6"/>
<polyline points="219.9,530.4 392.8,530.4" fill="none" stroke="#f3f0f0" stroke-width="1.6"/>
<polyline points="219.9,538.1 392.8,538.1" fill="none" stroke="#f3f0f0" stroke-width="1.6"/>
<polyline points="219.9,545.9 392.8,545.9" fill="none" stroke="#f3f0f0" stroke-width="1.6"/>
<polyline points="219.9,553.6 392.8,553.6" fill="none" stroke="#f3f0f0" stroke-width="1.6"/>
<polyline points="219.9,561.4 392.8,561.4" fill="none" stroke="#f3f0f0" stroke-width="1.6"/>
<polyline points="219.9,569.2 392.8,569.2" fill="none" stroke="#f3f0f0" stroke-width="1.6"/>
<polyline points="219.9,576.9 392.8,576.9" fill="none" stroke="#f3f0f0" stroke-width="1.6"/>
<rect x="195.2" y="501.1" width="15.9" height="16.9" fill="#b7b7b7"/>
<rect x="495.8" y="446.4" width="133" height="135.1" fill="#fff"/>
<rect x="653.9" y="461.6" width="118.9" height="119.9" fill="#fff"/>
<rect x="469.4" y="401.6" width="32.5" height="18.3" fill="#fff" stroke="#9b908c" stroke-width="0.4"/>
<rect x="506.4" y="400.6" width="79.4" height="21.9" fill="#fff" stroke="#9b908c" stroke-width="0.4"/>
<rect x="457" y="609.7" width="74.1" height="21.9" fill="#fff" stroke="#9b908c" stroke-width="0.4"/>
<rect x="805.2" y="482.4" width="10.6" height="10.6" fill="#f6eeec" stroke="#a0887f" stroke-width="0.3"/>
<rect x="805.2" y="496.5" width="10.6" height="9.2" fill="#f6eeec" stroke="#a0887f" stroke-width="0.3"/>
<rect x="805.2" y="509.9" width="10.6" height="8.8" fill="#f6eeec" stroke="#a0887f" stroke-width="0.3"/>
<rect x="805.2" y="522.6" width="10.6" height="11.3" fill="#f6eeec" stroke="#a0887f" stroke-width="0.3"/>
<rect x="805.2" y="538.1" width="15.2" height="22.9" fill="#f6eeec" stroke="#a0887f" stroke-width="0.3"/>
<rect x="823.9" y="538.1" width="15.2" height="4.2" fill="#c9a9a0"/>
<rect x="782.6" y="593.9" width="16.6" height="7.1" fill="#eed9d2" stroke="#a0887f" stroke-width="0.3"/>
<rect x="853.2" y="471.1" width="6.3" height="42.3" fill="#e8dad6" stroke="#a59a96" stroke-width="0.3"/>
<rect x="853.2" y="557.5" width="6.3" height="37" fill="#e8dad6" stroke="#a59a96" stroke-width="0.3"/>
<circle cx="822.6" cy="353.1" r="4.5" fill="#fff"/>
<circle cx="835.4" cy="353.1" r="4.5" fill="#fff"/>
<circle cx="848.2" cy="353.1" r="4.5" fill="#fff"/>
<circle cx="861" cy="353.1" r="4.5" fill="#fff"/>
<circle cx="873.8" cy="353.1" r="4.5" fill="#fff"/>
<circle cx="886.6" cy="353.1" r="4.5" fill="#fff"/>
<circle cx="899.4" cy="353.1" r="4.5" fill="#fff"/>
<circle cx="912.2" cy="353.1" r="4.5" fill="#fff"/>
<circle cx="804.5" cy="350.1" r="1.1" fill="#fff"/>
<circle cx="804.5" cy="366.7" r="1.1" fill="#fff"/>
<circle cx="929.7" cy="350.1" r="1.1" fill="#fff"/>
<circle cx="929.7" cy="366.7" r="1.1" fill="#fff"/>
<rect x="889.4" y="421" width="28.2" height="19" fill="#fff"/>
<rect x="952.1" y="449.2" width="9.5" height="37.7" fill="#efe2de" stroke="#a59a96" stroke-width="0.3"/>
<circle cx="1141.6" cy="463.3" r="7.4" fill="#fff"/>
<circle cx="1141.6" cy="489.1" r="7.4" fill="#fff"/>
<circle cx="1029.4" cy="586.5" r="5.3" fill="#fff"/>
<rect x="985.3" y="540.9" width="5.6" height="14.8" fill="#fff"/>
<rect x="1047" y="429.8" width="15.2" height="5.3" fill="#f3ece9" stroke="#8d8480" stroke-width="0.3"/>
<rect x="1047" y="597" width="15.2" height="5.3" fill="#f3ece9" stroke="#8d8480" stroke-width="0.3"/>
<rect x="1240.7" y="448.9" width="46.9" height="132.6" fill="#fff"/></g>
<g id="L-detail"><polyline points="325.8,378 325.8,387.5" fill="none" stroke="#7d7d7d" stroke-width="0.5"/>
<polyline points="325.8,649.6 325.8,658.8" fill="none" stroke="#7d7d7d" stroke-width="0.5"/>
<polyline points="337.8,378 337.8,387.5" fill="none" stroke="#7d7d7d" stroke-width="0.5"/>
<polyline points="337.8,649.6 337.8,658.8" fill="none" stroke="#7d7d7d" stroke-width="0.5"/>
<polyline points="349.8,378 349.8,387.5" fill="none" stroke="#7d7d7d" stroke-width="0.5"/>
<polyline points="349.8,649.6 349.8,658.8" fill="none" stroke="#7d7d7d" stroke-width="0.5"/>
<polyline points="361.7,378 361.7,387.5" fill="none" stroke="#7d7d7d" stroke-width="0.5"/>
<polyline points="361.7,649.6 361.7,658.8" fill="none" stroke="#7d7d7d" stroke-width="0.5"/>
<polyline points="373.7,378 373.7,387.5" fill="none" stroke="#7d7d7d" stroke-width="0.5"/>
<polyline points="373.7,649.6 373.7,658.8" fill="none" stroke="#7d7d7d" stroke-width="0.5"/>
<polyline points="385.7,378 385.7,387.5" fill="none" stroke="#7d7d7d" stroke-width="0.5"/>
<polyline points="385.7,649.6 385.7,658.8" fill="none" stroke="#7d7d7d" stroke-width="0.5"/>
<polyline points="397.7,378 397.7,387.5" fill="none" stroke="#7d7d7d" stroke-width="0.5"/>
<polyline points="397.7,649.6 397.7,658.8" fill="none" stroke="#7d7d7d" stroke-width="0.5"/>
<polyline points="409.7,378 409.7,387.5" fill="none" stroke="#7d7d7d" stroke-width="0.5"/>
<polyline points="409.7,649.6 409.7,658.8" fill="none" stroke="#7d7d7d" stroke-width="0.5"/>
<polyline points="421.7,378 421.7,387.5" fill="none" stroke="#7d7d7d" stroke-width="0.5"/>
<polyline points="421.7,649.6 421.7,658.8" fill="none" stroke="#7d7d7d" stroke-width="0.5"/>
<polyline points="121.5,425.2 131.7,425.2" fill="none" stroke="#7d7d7d" stroke-width="0.5"/>
<polyline points="121.5,435.1 131.7,435.1" fill="none" stroke="#7d7d7d" stroke-width="0.5"/>
<polyline points="121.5,445 131.7,445" fill="none" stroke="#7d7d7d" stroke-width="0.5"/>
<polyline points="121.5,454.9 131.7,454.9" fill="none" stroke="#7d7d7d" stroke-width="0.5"/>
<polyline points="121.5,464.8 131.7,464.8" fill="none" stroke="#7d7d7d" stroke-width="0.5"/>
<polyline points="121.5,474.6 131.7,474.6" fill="none" stroke="#7d7d7d" stroke-width="0.5"/>
<polyline points="121.5,484.5 131.7,484.5" fill="none" stroke="#7d7d7d" stroke-width="0.5"/>
<polyline points="121.5,494.4 131.7,494.4" fill="none" stroke="#7d7d7d" stroke-width="0.5"/>
<polyline points="121.5,504.3 131.7,504.3" fill="none" stroke="#7d7d7d" stroke-width="0.5"/>
<polyline points="121.5,514.1 131.7,514.1" fill="none" stroke="#7d7d7d" stroke-width="0.5"/>
<polyline points="121.5,524 131.7,524" fill="none" stroke="#7d7d7d" stroke-width="0.5"/>
<polyline points="121.5,533.9 131.7,533.9" fill="none" stroke="#7d7d7d" stroke-width="0.5"/>
<polyline points="121.5,543.8 131.7,543.8" fill="none" stroke="#7d7d7d" stroke-width="0.5"/>
<polyline points="121.5,553.6 131.7,553.6" fill="none" stroke="#7d7d7d" stroke-width="0.5"/>
<polyline points="121.5,563.5 131.7,563.5" fill="none" stroke="#7d7d7d" stroke-width="0.5"/>
<polyline points="121.5,573.4 131.7,573.4" fill="none" stroke="#7d7d7d" stroke-width="0.5"/>
<polyline points="121.5,583.3 131.7,583.3" fill="none" stroke="#7d7d7d" stroke-width="0.5"/>
<polyline points="121.5,593.2 131.7,593.2" fill="none" stroke="#7d7d7d" stroke-width="0.5"/>
<polyline points="121.5,603 131.7,603" fill="none" stroke="#7d7d7d" stroke-width="0.5"/>
<polyline points="121.5,612.9 131.7,612.9" fill="none" stroke="#7d7d7d" stroke-width="0.5"/>
<polyline points="137.4,404.3 139.9,416.4" fill="none" stroke="#7d7d7d" stroke-width="0.5"/>
<polyline points="137.4,632.4 139.9,620.4" fill="none" stroke="#7d7d7d" stroke-width="0.5"/>
<polyline points="148,401.9 150.4,413.7" fill="none" stroke="#7d7d7d" stroke-width="0.5"/>
<polyline points="148,634.9 150.4,623" fill="none" stroke="#7d7d7d" stroke-width="0.5"/>
<polyline points="158.6,399.5 161,411" fill="none" stroke="#7d7d7d" stroke-width="0.5"/>
<polyline points="158.6,637.3 161,625.7" fill="none" stroke="#7d7d7d" stroke-width="0.5"/>
<polyline points="169.1,397 171.6,408.3" fill="none" stroke="#7d7d7d" stroke-width="0.5"/>
<polyline points="169.1,639.7 171.6,628.4" fill="none" stroke="#7d7d7d" stroke-width="0.5"/>
<polyline points="179.7,394.7 182.2,406" fill="none" stroke="#7d7d7d" stroke-width="0.5"/>
<polyline points="179.7,642.1 182.2,630.8" fill="none" stroke="#7d7d7d" stroke-width="0.5"/>
<polyline points="190.3,392.4 192.8,403.7" fill="none" stroke="#7d7d7d" stroke-width="0.5"/>
<polyline points="190.3,644.4 192.8,633.1" fill="none" stroke="#7d7d7d" stroke-width="0.5"/>
<polyline points="200.9,390 203.4,401.3" fill="none" stroke="#7d7d7d" stroke-width="0.5"/>
<polyline points="200.9,646.7 203.4,635.4" fill="none" stroke="#7d7d7d" stroke-width="0.5"/>
<polyline points="211.5,388.1 213.9,399.4" fill="none" stroke="#7d7d7d" stroke-width="0.5"/>
<polyline points="211.5,648.6 213.9,637.4" fill="none" stroke="#7d7d7d" stroke-width="0.5"/>
<polyline points="222.1,386.4 224.5,397.6" fill="none" stroke="#7d7d7d" stroke-width="0.5"/>
<polyline points="222.1,650.3 224.5,639.2" fill="none" stroke="#7d7d7d" stroke-width="0.5"/>
<polyline points="232.6,384.7 235.1,395.8" fill="none" stroke="#7d7d7d" stroke-width="0.5"/>
<polyline points="232.6,652 235.1,641" fill="none" stroke="#7d7d7d" stroke-width="0.5"/>
<polyline points="243.2,383.2 245.7,394.1" fill="none" stroke="#7d7d7d" stroke-width="0.5"/>
<polyline points="243.2,653.5 245.7,642.6" fill="none" stroke="#7d7d7d" stroke-width="0.5"/>
<polyline points="253.8,382.1 256.3,392.9" fill="none" stroke="#7d7d7d" stroke-width="0.5"/>
<polyline points="253.8,654.7 256.3,643.9" fill="none" stroke="#7d7d7d" stroke-width="0.5"/>
<polyline points="264.4,380.9 266.9,391.6" fill="none" stroke="#7d7d7d" stroke-width="0.5"/>
<polyline points="264.4,655.8 266.9,645.2" fill="none" stroke="#7d7d7d" stroke-width="0.5"/>
<polyline points="275,379.7 277.4,390.3" fill="none" stroke="#7d7d7d" stroke-width="0.5"/>
<polyline points="275,657 277.4,646.4" fill="none" stroke="#7d7d7d" stroke-width="0.5"/>
<polyline points="285.6,379.2 288,389.7" fill="none" stroke="#7d7d7d" stroke-width="0.5"/>
<polyline points="285.6,657.5 288,647" fill="none" stroke="#7d7d7d" stroke-width="0.5"/>
<polyline points="296.1,378.7 298.6,389.1" fill="none" stroke="#7d7d7d" stroke-width="0.5"/>
<polyline points="296.1,658.1 298.6,647.7" fill="none" stroke="#7d7d7d" stroke-width="0.5"/>
<polyline points="306.7,378.2 309.2,388.5" fill="none" stroke="#7d7d7d" stroke-width="0.5"/>
<polyline points="306.7,658.6 309.2,648.3" fill="none" stroke="#7d7d7d" stroke-width="0.5"/>
<rect x="268.6" y="422.8" width="9.5" height="7.8" fill="#a9a9a9"/>
<rect x="281.7" y="422.8" width="9.5" height="7.8" fill="#a9a9a9"/>
<rect x="294.7" y="422.8" width="9.5" height="7.8" fill="#a9a9a9"/>
<rect x="308.1" y="422.8" width="9.5" height="7.8" fill="#a9a9a9"/>
<rect x="320.8" y="422.8" width="9.5" height="7.8" fill="#a9a9a9"/>
<rect x="167" y="501.4" width="8.1" height="6.3" fill="#b5b5b5"/>
<rect x="151.1" y="542" width="8.8" height="7.1" fill="#b5b5b5"/>
<polygon points="174.1,430.5 181.1,427 184.7,434.1 177.6,437.6" fill="#b5b5b5"/>
<polygon points="174.1,603.4 181.1,599.9 184.7,606.9 177.6,610.4" fill="#b5b5b5"/>
<circle cx="168.8" cy="478.5" r="4.9" fill="#fff"/>
<circle cx="331.8" cy="634.1" r="3.2" fill="#f1d64a"/>
<circle cx="235.8" cy="418.2" r="3.2" fill="#0c0c0c"/>
<circle cx="160" cy="462.6" r="3.2" fill="#0c0c0c"/>
<circle cx="140.6" cy="475.7" r="3.2" fill="#0c0c0c"/>
<circle cx="172" cy="527.2" r="3.2" fill="#0c0c0c"/>
<circle cx="140.6" cy="584.7" r="3.2" fill="#0c0c0c"/>
<circle cx="160.7" cy="588.2" r="3.2" fill="#0c0c0c"/>
<circle cx="176.2" cy="583.3" r="3.2" fill="#0c0c0c"/>
<circle cx="235.8" cy="618.6" r="3.2" fill="#0c0c0c"/>
<polyline points="229.8,405.5 241.8,405.5" fill="none" stroke="#0c0c0c" stroke-width="3.2" stroke-linecap="round"/>
<polyline points="366.3,402.3 378.7,402.3" fill="none" stroke="#0c0c0c" stroke-width="3.2" stroke-linecap="round"/>
<polyline points="229.8,630.6 241.8,630.6" fill="none" stroke="#0c0c0c" stroke-width="3.2" stroke-linecap="round"/>
<polyline points="366.3,634.8 378.7,634.8" fill="none" stroke="#0c0c0c" stroke-width="3.2" stroke-linecap="round"/>
<polyline points="145.9,525.1 159.3,526.1" fill="none" stroke="#0c0c0c" stroke-width="3.2" stroke-linecap="round"/>
<polyline points="169.8,564.2 180.4,564.2" fill="none" stroke="#0c0c0c" stroke-width="3.2" stroke-linecap="round"/>
<polyline points="154,485.9 149.4,497.6" fill="none" stroke="#0c0c0c" stroke-width="3.4" stroke-linecap="round"/>
<polyline points="139.5,485.2 139.5,493" fill="none" stroke="#0c0c0c" stroke-width="3" stroke-linecap="round"/>
<rect x="242.9" y="439.4" width="11.3" height="11.3" fill="none" stroke="#2a0806" stroke-width="0.6"/>
<rect x="413.2" y="555.8" width="13.4" height="13.4" fill="none" stroke="#2a0806" stroke-width="0.6"/>
<rect x="426.3" y="401.6" width="5.6" height="5.6" fill="none" stroke="#2a0806" stroke-width="0.6"/>
<rect x="426.3" y="629.8" width="5.6" height="5.6" fill="none" stroke="#2a0806" stroke-width="0.6"/>
<circle cx="424.5" cy="504.6" r="4.2" fill="none" stroke="#2a0806" stroke-width="0.6"/>
<g transform="rotate(-18 141.6 409.7)"><rect x="137.1" y="405.7" width="9" height="8" fill="#111"/><rect x="139.1" y="407.2" width="5" height="5" fill="#ddd"/></g>
<g transform="rotate(-14 160.7 404.8)"><rect x="156.2" y="400.8" width="9" height="8" fill="#111"/><rect x="158.2" y="402.3" width="5" height="5" fill="#ddd"/></g>
<g transform="rotate(-9 216.4 393.5)"><rect x="211.9" y="389.5" width="9" height="8" fill="#111"/><rect x="213.9" y="391" width="5" height="5" fill="#ddd"/></g>
<g transform="rotate(-4 273.6 385.7)"><rect x="269.1" y="381.7" width="9" height="8" fill="#111"/><rect x="271.1" y="383.2" width="5" height="5" fill="#ddd"/></g>
<g transform="rotate(18 141.6 627)"><rect x="137.1" y="623" width="9" height="8" fill="#111"/><rect x="139.1" y="624.5" width="5" height="5" fill="#ddd"/></g>
<g transform="rotate(14 160.7 632)"><rect x="156.2" y="628" width="9" height="8" fill="#111"/><rect x="158.2" y="629.5" width="5" height="5" fill="#ddd"/></g>
<g transform="rotate(9 216.4 643.2)"><rect x="211.9" y="639.2" width="9" height="8" fill="#111"/><rect x="213.9" y="640.7" width="5" height="5" fill="#ddd"/></g>
<g transform="rotate(4 273.6 651)"><rect x="269.1" y="647" width="9" height="8" fill="#111"/><rect x="271.1" y="648.5" width="5" height="5" fill="#ddd"/></g>
<rect x="122.8" y="442.2" width="11" height="7" fill="#111"/><rect x="124.3" y="443.7" width="5" height="4" fill="#ddd"/>
<rect x="122.8" y="464.8" width="11" height="7" fill="#111"/><rect x="124.3" y="466.3" width="5" height="4" fill="#ddd"/>
<rect x="122.8" y="501.1" width="11" height="7" fill="#111"/><rect x="124.3" y="502.6" width="5" height="4" fill="#ddd"/>
<rect x="122.8" y="563.6" width="11" height="7" fill="#111"/><rect x="124.3" y="565.1" width="5" height="4" fill="#ddd"/>
<rect x="122.8" y="585.8" width="11" height="7" fill="#111"/><rect x="124.3" y="587.3" width="5" height="4" fill="#ddd"/>
<circle cx="126.8" cy="479.6" r="3.2" fill="#ddd" stroke="#333" stroke-width="0.7"/>
<circle cx="126.8" cy="479.6" r="1.4" fill="#333"/>
<circle cx="126.8" cy="518" r="3.2" fill="#ddd" stroke="#333" stroke-width="0.7"/>
<circle cx="126.8" cy="518" r="1.4" fill="#333"/>
<circle cx="126.8" cy="555.8" r="3.2" fill="#ddd" stroke="#333" stroke-width="0.7"/>
<circle cx="126.8" cy="555.8" r="1.4" fill="#333"/>
<circle cx="246.4" cy="390.7" r="2.8" fill="#ddd" stroke="#333" stroke-width="0.7"/>
<circle cx="246.4" cy="390.7" r="1.2" fill="#333"/>
<circle cx="361" cy="382.9" r="2.8" fill="#ddd" stroke="#333" stroke-width="0.7"/>
<circle cx="361" cy="382.9" r="1.2" fill="#333"/>
<circle cx="246.4" cy="646.1" r="2.8" fill="#ddd" stroke="#333" stroke-width="0.7"/>
<circle cx="246.4" cy="646.1" r="1.2" fill="#333"/>
<circle cx="361" cy="653.8" r="2.8" fill="#ddd" stroke="#333" stroke-width="0.7"/>
<circle cx="361" cy="653.8" r="1.2" fill="#333"/>
<path d="M146.4 387.4L148 397.4" stroke="#333" stroke-width="0.5" stroke-dasharray="1.6 0.9" fill="none"/>
<path d="M146.1 396.2L149.7 395.8L148.3 400.4Z" fill="#111"/>
<path d="M145 388.9H148" stroke="#555" stroke-width="0.4"/>
<path d="M146.4 649.4L148 639.4" stroke="#333" stroke-width="0.5" stroke-dasharray="1.6 0.9" fill="none"/>
<path d="M146.1 640.6L149.7 641L148.3 636.4Z" fill="#111"/>
<path d="M145 647.9H148" stroke="#555" stroke-width="0.4"/>
<path d="M164.1 384.8L165.7 394.8" stroke="#333" stroke-width="0.5" stroke-dasharray="1.6 0.9" fill="none"/>
<path d="M163.8 393.6L167.4 393.2L166 397.8Z" fill="#111"/>
<path d="M162.7 386.3H165.7" stroke="#555" stroke-width="0.4"/>
<path d="M164.1 652L165.7 642" stroke="#333" stroke-width="0.5" stroke-dasharray="1.6 0.9" fill="none"/>
<path d="M163.8 643.2L167.4 643.6L166 639Z" fill="#111"/>
<path d="M162.7 650.5H165.7" stroke="#555" stroke-width="0.4"/>
<path d="M175.2 382.1L176.8 392.1" stroke="#333" stroke-width="0.5" stroke-dasharray="1.6 0.9" fill="none"/>
<path d="M174.9 390.9L178.5 390.5L177.1 395.1Z" fill="#111"/>
<path d="M173.8 383.6H176.8" stroke="#555" stroke-width="0.4"/>
<path d="M175.2 654.7L176.8 644.7" stroke="#333" stroke-width="0.5" stroke-dasharray="1.6 0.9" fill="none"/>
<path d="M174.9 645.9L178.5 646.3L177.1 641.7Z" fill="#111"/>
<path d="M173.8 653.2H176.8" stroke="#555" stroke-width="0.4"/>
<path d="M185.7 380.2L187.3 390.2" stroke="#333" stroke-width="0.5" stroke-dasharray="1.6 0.9" fill="none"/>
<path d="M185.4 389L189 388.6L187.6 393.2Z" fill="#111"/>
<path d="M184.3 381.7H187.3" stroke="#555" stroke-width="0.4"/>
<path d="M185.7 656.6L187.3 646.6" stroke="#333" stroke-width="0.5" stroke-dasharray="1.6 0.9" fill="none"/>
<path d="M185.4 647.8L189 648.2L187.6 643.6Z" fill="#111"/>
<path d="M184.3 655.1H187.3" stroke="#555" stroke-width="0.4"/>
<path d="M194.9 378.9L196.5 388.9" stroke="#333" stroke-width="0.5" stroke-dasharray="1.6 0.9" fill="none"/>
<path d="M194.6 387.7L198.2 387.3L196.8 391.9Z" fill="#111"/>
<path d="M193.5 380.4H196.5" stroke="#555" stroke-width="0.4"/>
<path d="M194.9 657.9L196.5 647.9" stroke="#333" stroke-width="0.5" stroke-dasharray="1.6 0.9" fill="none"/>
<path d="M194.6 649.1L198.2 649.5L196.8 644.9Z" fill="#111"/>
<path d="M193.5 656.4H196.5" stroke="#555" stroke-width="0.4"/>
<path d="M206 376.9L207.6 386.9" stroke="#333" stroke-width="0.5" stroke-dasharray="1.6 0.9" fill="none"/>
<path d="M205.7 385.7L209.3 385.3L207.9 389.9Z" fill="#111"/>
<path d="M204.6 378.4H207.6" stroke="#555" stroke-width="0.4"/>
<path d="M206 659.9L207.6 649.9" stroke="#333" stroke-width="0.5" stroke-dasharray="1.6 0.9" fill="none"/>
<path d="M205.7 651.1L209.3 651.5L207.9 646.9Z" fill="#111"/>
<path d="M204.6 658.4H207.6" stroke="#555" stroke-width="0.4"/>
<path d="M219.1 374.3L220.7 384.3" stroke="#333" stroke-width="0.5" stroke-dasharray="1.6 0.9" fill="none"/>
<path d="M218.8 383.1L222.4 382.7L221 387.3Z" fill="#111"/>
<path d="M217.7 375.8H220.7" stroke="#555" stroke-width="0.4"/>
<path d="M219.1 662.5L220.7 652.5" stroke="#333" stroke-width="0.5" stroke-dasharray="1.6 0.9" fill="none"/>
<path d="M218.8 653.7L222.4 654.1L221 649.5Z" fill="#111"/>
<path d="M217.7 661H220.7" stroke="#555" stroke-width="0.4"/>
<path d="M229 373L230.6 383" stroke="#333" stroke-width="0.5" stroke-dasharray="1.6 0.9" fill="none"/>
<path d="M228.7 381.8L232.3 381.4L230.9 386Z" fill="#111"/>
<path d="M227.6 374.5H230.6" stroke="#555" stroke-width="0.4"/>
<path d="M229 663.8L230.6 653.8" stroke="#333" stroke-width="0.5" stroke-dasharray="1.6 0.9" fill="none"/>
<path d="M228.7 655L232.3 655.4L230.9 650.8Z" fill="#111"/>
<path d="M227.6 662.3H230.6" stroke="#555" stroke-width="0.4"/>
<path d="M239.4 371L241 381" stroke="#333" stroke-width="0.5" stroke-dasharray="1.6 0.9" fill="none"/>
<path d="M239.1 379.8L242.7 379.4L241.3 384Z" fill="#111"/>
<path d="M238 372.5H241" stroke="#555" stroke-width="0.4"/>
<path d="M239.4 665.8L241 655.8" stroke="#333" stroke-width="0.5" stroke-dasharray="1.6 0.9" fill="none"/>
<path d="M239.1 657L242.7 657.4L241.3 652.8Z" fill="#111"/>
<path d="M238 664.3H241" stroke="#555" stroke-width="0.4"/>
<path d="M123.8 398.4L129.7 410.9" stroke="#333" stroke-width="0.5" stroke-dasharray="1.6 0.9" fill="none"/>
<path d="M123.8 638.4L129.7 625.9" stroke="#333" stroke-width="0.5" stroke-dasharray="1.6 0.9" fill="none"/>
<polygon points="264.4,663.7 267.2,663.7 265.8,659.1" fill="#111"/>
<polygon points="280.3,663.7 283.1,663.7 281.7,659.1" fill="#111"/>
<polygon points="294.4,663.7 297.2,663.7 295.8,659.1" fill="#111"/>
<polygon points="305,663.7 307.8,663.7 306.4,659.1" fill="#111"/>
<polygon points="316.6,663.7 319.4,663.7 318,659.1" fill="#111"/>
<polygon points="327.2,663.7 330,663.7 328.6,659.1" fill="#111"/>
<polygon points="338.5,663.7 341.3,663.7 339.9,659.1" fill="#111"/>
<text x="338.1" y="515.2" font-family="Liberation Sans, serif" font-size="6" fill="#111" text-anchor="middle" dominant-baseline="central" transform="rotate(90 338.1 515.2)" font-weight="bold">29</text>
<text x="562.2" y="513.4" font-family="Liberation Serif, serif" font-size="11" fill="#b5adab" text-anchor="middle" dominant-baseline="central" transform="rotate(90 562.2 513.4)">93-94</text>
<text x="714.6" y="522.3" font-family="Liberation Serif, serif" font-size="11" fill="#b5adab" text-anchor="middle" dominant-baseline="central" transform="rotate(90 714.6 522.3)">95-96</text>
<polyline points="572.4,400.6 572.4,422.4" fill="none" stroke="#9b908c" stroke-width="0.4"/>
<text x="485.6" y="410.8" font-family="Liberation Serif, serif" font-size="8" fill="#b0a8a6" text-anchor="middle" dominant-baseline="central" transform="rotate(180 485.6 410.8)">110-111</text>
<text x="539.2" y="411.5" font-family="Liberation Serif, serif" font-size="12" fill="#b0a8a6" text-anchor="middle" dominant-baseline="central" transform="rotate(180 539.2 411.5)">108-109</text>
<text x="579.1" y="411.5" font-family="DejaVu Sans, serif" font-size="6.5" fill="#555" text-anchor="middle" dominant-baseline="central" transform="rotate(90 579.1 411.5)">✂</text>
<polyline points="466.6,609.7 466.6,631.6" fill="none" stroke="#9b908c" stroke-width="0.4"/>
<text x="498.3" y="620.7" font-family="Liberation Serif, serif" font-size="12" fill="#b0a8a6" text-anchor="middle" dominant-baseline="central">108-109</text>
<text x="461.6" y="620.7" font-family="DejaVu Sans, serif" font-size="6.5" fill="#555" text-anchor="middle" dominant-baseline="central" transform="rotate(90 461.6 620.7)">✂</text>
<rect x="795.7" y="479.9" width="28.2" height="81.8" fill="none" stroke="#9a5a4c" stroke-width="0.4"/>
<circle cx="788.6" cy="475.3" r="1.1" fill="#f6e6e0"/>
<circle cx="838" cy="475.3" r="1.1" fill="#f6e6e0"/>
<circle cx="788.6" cy="566.3" r="1.1" fill="#f6e6e0"/>
<circle cx="838" cy="566.3" r="1.1" fill="#f6e6e0"/>
<rect x="427.8" y="401.3" width="5.5" height="5.5" fill="none" stroke="#260504" stroke-width="0.6"/>
<rect x="616.5" y="401.3" width="5.5" height="5.5" fill="none" stroke="#260504" stroke-width="0.6"/>
<rect x="677.5" y="401.3" width="5.5" height="5.5" fill="none" stroke="#260504" stroke-width="0.6"/>
<rect x="747" y="401.3" width="5.5" height="5.5" fill="none" stroke="#260504" stroke-width="0.6"/>
<rect x="424.2" y="629.8" width="5.5" height="5.5" fill="none" stroke="#260504" stroke-width="0.6"/>
<circle cx="423.5" cy="504.6" r="2.5" fill="none" stroke="#260504" stroke-width="0.5"/>
<circle cx="469.4" cy="504.6" r="2.5" fill="none" stroke="#260504" stroke-width="0.5"/>
<circle cx="435.9" cy="484.2" r="1.6" fill="none" stroke="#260504" stroke-width="0.5"/>
<circle cx="467.6" cy="479.9" r="1.6" fill="none" stroke="#260504" stroke-width="0.5"/>
<circle cx="435.9" cy="600.9" r="1.6" fill="none" stroke="#260504" stroke-width="0.5"/>
<circle cx="467.6" cy="557.5" r="1.6" fill="none" stroke="#260504" stroke-width="0.5"/>
<rect x="487" y="386.4" width="14.8" height="2.8" fill="#111"/>
<rect x="487" y="649.2" width="14.8" height="2.5" fill="#111"/>
<polyline points="831,630.9 838,636.9" fill="none" stroke="#0c0c0c" stroke-width="3" stroke-linecap="round"/>
<polyline points="476.4,387.5 501.1,378.3 561.1,378.3 566.4,386.4 589.3,386.4 593.6,378.3" fill="none" stroke="#555" stroke-width="0.4"/>
<polyline points="628.1,387.5 636.9,379.4 688.1,379.4 695.2,387.5" fill="none" stroke="#555" stroke-width="0.4"/>
<polyline points="628.1,649.2 636.9,657.4 688.1,657.4 695.2,649.2" fill="none" stroke="#555" stroke-width="0.4"/>
<polyline points="476.4,649.2 501.1,651.7 589.3,651.7" fill="none" stroke="#555" stroke-width="0.4" stroke-dasharray="2 1"/>
<polyline points="585.8,605.2 585.8,659.8" fill="none" stroke="#444" stroke-width="0.5"/>
<polyline points="569.9,605.2 581.6,600.9 575.2,633.4 569.9,605.2" fill="none" stroke="#c9b8b2" stroke-width="0.6"/>
<polyline points="803.3,401.6 932.4,401.6" fill="none" stroke="#fbe3da" stroke-width="0.9" stroke-dasharray="1.4 15.6"/>
<text x="903.5" y="430.5" font-family="Liberation Serif, serif" font-size="7.5" fill="#b0a8a6" text-anchor="middle" dominant-baseline="central" transform="rotate(180 903.5 430.5)">173-174</text>
<polyline points="989.9,444.6 989.9,455.2" fill="none" stroke="#b05a4a" stroke-width="0.4"/>
<polyline points="1028.7,444.6 1028.7,455.2" fill="none" stroke="#b05a4a" stroke-width="0.4"/>
<polyline points="989.9,499.3 1025.2,499.3" fill="none" stroke="#b05a4a" stroke-width="0.4"/>
<polyline points="1134.5,435.8 1134.5,471.1" fill="none" stroke="#b05a4a" stroke-width="0.4"/>
<polyline points="1156.7,435.8 1156.7,478.2" fill="none" stroke="#b05a4a" stroke-width="0.4"/>
<polyline points="1108.1,528.3 1162.7,528.3" fill="none" stroke="#b05a4a" stroke-width="0.4"/>
<polyline points="1108.1,528.3 1108.1,584" fill="none" stroke="#b05a4a" stroke-width="0.4"/>
<polyline points="1178.6,555.8 1178.6,569.9" fill="none" stroke="#b05a4a" stroke-width="0.4"/>
<polyline points="1189.2,576.9 1189.2,587.5" fill="none" stroke="#b05a4a" stroke-width="0.4"/>
<polyline points="1146.9,576.9 1146.9,587.5" fill="none" stroke="#b05a4a" stroke-width="0.4"/>
<polyline points="1094,485.9 1123.9,485.9" fill="none" stroke="#b05a4a" stroke-width="0.4"/>
<polyline points="1099.2,490.5 1099.2,499.3 1113.4,499.3 1113.4,490.5" fill="none" stroke="#b05a4a" stroke-width="0.4"/>
<polyline points="977.5,589.3 1041,589.3" fill="none" stroke="#b05a4a" stroke-width="0.4"/>
<rect x="1103.8" y="457" width="15.9" height="10.6" fill="none" stroke="#b05a4a" stroke-width="0.4"/>
<rect x="980.4" y="576.9" width="10.6" height="15.9" fill="none" stroke="#b05a4a" stroke-width="0.4"/>
<circle cx="1187.4" cy="485.2" r="4.9" fill="none" stroke="#b05a4a" stroke-width="0.4"/>
<circle cx="1113.4" cy="616.4" r="3.9" fill="none" stroke="#3a0a08" stroke-width="0.5"/>
<rect x="976.5" y="401.3" width="5.5" height="5.5" fill="none" stroke="#260504" stroke-width="0.6"/>
<rect x="976.5" y="631.3" width="5.5" height="5.5" fill="none" stroke="#260504" stroke-width="0.6"/>
<rect x="1029.4" y="401.3" width="5.5" height="5.5" fill="none" stroke="#260504" stroke-width="0.6"/>
<rect x="1029.4" y="631.3" width="5.5" height="5.5" fill="none" stroke="#260504" stroke-width="0.6"/>
<rect x="1129.9" y="401.3" width="5.5" height="5.5" fill="none" stroke="#260504" stroke-width="0.6"/>
<rect x="1129.9" y="631.3" width="5.5" height="5.5" fill="none" stroke="#260504" stroke-width="0.6"/>
<polyline points="829.4,630.9 836.4,636.2" fill="none" stroke="#0c0c0c" stroke-width="3" stroke-linecap="round"/>
<text x="984.6" y="657.7" font-family="Liberation Sans, serif" font-size="3.4" fill="#111" text-anchor="middle" dominant-baseline="central" font-weight="bold" textLength="104">Die Schnittstelle 31. dann kann</text>
<polyline points="1079.8,381.1 1079.8,388.2" fill="none" stroke="#555" stroke-width="0.4"/>
<polyline points="1079.8,388.2 1079.8,420" fill="none" stroke="#2a0604" stroke-width="0.4"/>
<polyline points="1079.8,612.2 1079.8,649.2" fill="none" stroke="#2a0604" stroke-width="0.4"/>
<polyline points="1079.8,649.2 1079.8,659.8" fill="none" stroke="#555" stroke-width="0.4"/>
<polyline points="1099.2,382.9 1102.8,387.5 1106.3,382.9" fill="none" stroke="#555" stroke-width="0.4"/>
<polyline points="1168,382.9 1172.3,387.5 1176.9,382.9" fill="none" stroke="#555" stroke-width="0.4"/>
<polyline points="1099.2,659.8 1102.8,655.2 1106.3,659.8" fill="none" stroke="#555" stroke-width="0.4"/>
<polyline points="1168,659.8 1172.3,655.2 1176.9,659.8" fill="none" stroke="#555" stroke-width="0.4"/>
<rect x="1534.5" y="471.8" width="15.9" height="7.8" fill="none" stroke="#2a0604" stroke-width="0.5"/>
<rect x="1534.5" y="561.1" width="15.9" height="7.8" fill="none" stroke="#2a0604" stroke-width="0.5"/>
<text x="1266.1" y="515.2" font-family="Liberation Serif, serif" font-size="11.5" fill="#b5adab" text-anchor="middle" dominant-baseline="central" transform="rotate(-90 1266.1 515.2)">197-198</text>
<circle cx="1358.8" cy="482.4" r="3.9" fill="none" stroke="#2a0604" stroke-width="0.5"/>
<circle cx="1335.2" cy="508.1" r="3.9" fill="none" stroke="#2a0604" stroke-width="0.5"/>
<circle cx="1358.8" cy="563.9" r="3.9" fill="none" stroke="#2a0604" stroke-width="0.5"/>
<circle cx="1335.2" cy="584" r="3.9" fill="none" stroke="#2a0604" stroke-width="0.5"/>
<rect x="1218.8" y="402.3" width="5.5" height="5.5" fill="none" stroke="#260504" stroke-width="0.6"/>
<rect x="1218.8" y="631.3" width="5.5" height="5.5" fill="none" stroke="#260504" stroke-width="0.6"/>
<rect x="1251.3" y="631.3" width="5.5" height="5.5" fill="none" stroke="#260504" stroke-width="0.6"/>
<rect x="1310.5" y="402.3" width="5.5" height="5.5" fill="none" stroke="#260504" stroke-width="0.6"/>
<rect x="1310.5" y="631.3" width="5.5" height="5.5" fill="none" stroke="#260504" stroke-width="0.6"/>
<polyline points="1276,625.6 1280.5,635.1" fill="none" stroke="#0c0c0c" stroke-width="3" stroke-linecap="round"/>
<rect x="1285.8" y="647.5" width="15.9" height="2.8" fill="#111"/>
<rect x="1285.8" y="390" width="15.9" height="2.1" fill="#2a0604"/>
<circle cx="1279.5" cy="405.8" r="1.8" fill="#111"/>
<polyline points="1241.7,382.9 1247,388.2 1252.3,382.9" fill="none" stroke="#555" stroke-width="0.4"/>
<polyline points="1312.3,382.9 1317.6,388.2 1322.9,382.9" fill="none" stroke="#555" stroke-width="0.4"/>
<polyline points="1241.7,659.8 1247,654.5 1252.3,659.8" fill="none" stroke="#555" stroke-width="0.4"/>
<polyline points="1312.3,659.8 1317.6,654.5 1322.9,659.8" fill="none" stroke="#555" stroke-width="0.4"/>
<polyline points="1497.5,418.2 1515.1,412.9 1529.2,423.5 1520.4,411.8" fill="none" stroke="#555" stroke-width="0.4"/>
<polyline points="1497.5,629.8 1515.1,624.6 1529.2,619.3 1520.4,630.6" fill="none" stroke="#555" stroke-width="0.4"/>
<polyline points="1555.7,395.3 1553.9,409.4" fill="none" stroke="#555" stroke-width="0.4" stroke-dasharray="2 1"/>
<polyline points="1555.7,644 1553.9,632.7" fill="none" stroke="#555" stroke-width="0.4" stroke-dasharray="2 1"/></g>
<g id="L-red"><rect x="860.4" y="390.7" width="658.9" height="261" fill="none" stroke="#e1261c" stroke-width="3"/>
<rect x="931.7" y="397" width="219.8" height="113.9" fill="none" stroke="#e1261c" stroke-width="3"/>
<rect x="914" y="558.2" width="177.1" height="82.2" fill="none" stroke="#e1261c" stroke-width="3"/>
<rect x="1162.7" y="538.8" width="177.8" height="112.9" fill="none" stroke="#e1261c" stroke-width="3"/>
<rect x="1381.8" y="417.1" width="117.5" height="134.4" fill="none" stroke="#e1261c" stroke-width="3"/></g>
<g id="L-handles"><rect x="930.2" y="394.8" width="3" height="3" fill="#ddd" stroke="#555" stroke-width="0.8"/>
<rect x="912.5" y="556.7" width="3" height="3" fill="#ddd" stroke="#3aa0c0" stroke-width="0.8"/>
<rect x="1161.2" y="537.3" width="3" height="3" fill="#ddd" stroke="#666" stroke-width="0.8"/>
<rect x="1380.3" y="415.6" width="3" height="3" fill="#ddd" stroke="#222" stroke-width="0.8"/>
<rect x="858.9" y="650.2" width="3" height="3" fill="#ddd" stroke="#666" stroke-width="0.8"/>
<rect x="849.3" y="379.1" width="6.4" height="6.4" fill="#1e86a6"/>
<rect x="1186.3" y="379.1" width="6.4" height="6.4" fill="#000"/>
<rect x="1522.3" y="379.1" width="6.4" height="6.4" fill="#000"/>
<rect x="849.3" y="518.3" width="6.4" height="6.4" fill="#2e3f4a"/>
<rect x="1522.3" y="518.3" width="6.4" height="6.4" fill="#86d8ee"/>
<rect x="849.3" y="656.1" width="6.4" height="6.4" fill="#000"/>
<rect x="1186.3" y="656.1" width="6.4" height="6.4" fill="#000"/>
<rect x="1522.3" y="656.1" width="6.4" height="6.4" fill="#000"/>
<path d="M1186.3 518.9L1192.7 525.3M1192.7 518.9L1186.3 525.3" stroke="#2a8fb4" stroke-width="1.9" fill="none"/></g>
</svg>
<!-- toolbar separators -->
<div class="vsep" style="left:135px;top:26px;height:20px;"></div>
<div class="vsep" style="left:227px;top:26px;height:20px;"></div>
<div class="vsep" style="left:321px;top:26px;height:20px;"></div>
<div class="vsep" style="left:357px;top:26px;height:20px;"></div>
<div class="vsep" style="left:449px;top:26px;height:20px;"></div>
<div class="vsep" style="left:574px;top:26px;height:20px;"></div>
<div class="vsep" style="left:666px;top:26px;height:20px;"></div>
<div class="vsep" style="left:772px;top:26px;height:20px;"></div>
<div class="vsep" style="left:836px;top:26px;height:20px;"></div>
<div class="vsep" style="left:156px;top:55px;height:33px;"></div>
<div class="vsep" style="left:353px;top:55px;height:33px;"></div>
<div class="vsep" style="left:454px;top:55px;height:33px;"></div>
<div class="vsep" style="left:518px;top:55px;height:33px;"></div>
<div class="vsep" style="left:629px;top:55px;height:33px;"></div>
<div class="vsep" style="left:693px;top:55px;height:33px;"></div>
<div class="vsep" style="left:729px;top:55px;height:33px;"></div>
<div class="vsep" style="left:793px;top:55px;height:33px;"></div>
<!-- toggle buttons (active) -->
<div class="box" style="left:581px;top:25px;width:23px;height:23px;border-color:#b5b5b5;"></div>
<div class="box" style="left:637px;top:25px;width:23px;height:23px;border-color:#b5b5b5;"></div>
<div class="box" style="left:334px;top:65px;width:13px;height:13px;border-color:#b5b5b5;"></div>

<svg width="1680" height="100" style="left:0;top:0" viewBox="0 0 1680 100">
<defs>
<linearGradient id="gLav" x1="0" y1="0" x2="0" y2="1"><stop offset="0" stop-color="#fff"/><stop offset="1" stop-color="#c9cbdd"/></linearGradient>
<linearGradient id="gNavy" x1="0" y1="0" x2="0" y2="1"><stop offset="0" stop-color="#23284f"/><stop offset="1" stop-color="#4b4f8c"/></linearGradient>
</defs>
<!-- New document -->
<g transform="translate(26,31.4)">
 <path d="M0.6 11.2V4.2L4.4 0.6H9.6V11.2Z" fill="#fff" stroke="#55566b" stroke-width="1.2"/>
 <rect x="1.2" y="6" width="7.8" height="4.6" fill="#dcdde8"/>
 <path d="M0.8 4.4H4.4V0.8" fill="none" stroke="#8b8c9c" stroke-width="0.8"/>
 <circle cx="10.3" cy="0.9" r="3" fill="#2a9a1c"/>
 <path d="M10.3 -2.8L11 -0.1 13.7 -0.9 11.6 0.9 13.7 2.7 11 2.1 10.3 4.7 9.6 2.1 6.9 2.7 9 0.9 6.9 -0.9 9.6 -0.1Z" fill="#1f8a12"/>
</g>
<!-- Open -->
<g transform="translate(54,30)">
 <path d="M0.5 12V1.2Q0.5 0.5 1.2 0.5H5L6.6 2.3H12Q12.7 2.3 12.7 3V5H0.5Z" fill="#2a2f5e"/>
 <path d="M0.5 12.4L2.4 5.2H14L11.8 12.4Z" fill="url(#gLav)" stroke="#2a2f5e" stroke-width="1"/>
 <path d="M0.5 12.2V3" stroke="#2a2f5e" stroke-width="1"/>
</g>
<!-- Save -->
<g transform="translate(83,31.5)">
 <path d="M0 0H10L12 2V11.5H0Z" fill="#3c4080"/>
 <rect x="2.6" y="0.8" width="6.6" height="4.4" fill="#fff"/>
 <rect x="3" y="7" width="6" height="4.5" fill="#23264f"/>
 <rect x="5.3" y="7.8" width="1.4" height="3.4" fill="#e8e8f0"/>
</g>
<!-- Print -->
<g transform="translate(110,29)">
 <rect x="3.2" y="0.4" width="7.6" height="7" fill="#fff" stroke="#b9bcc8" stroke-width="0.8"/>
 <path d="M0.6 13.4V8.2L2.6 6.6H11.4L13.4 8.2V13.4Z" fill="#f4f1d8" stroke="#4a4b5e" stroke-width="1.1"/>
 <rect x="1.2" y="7.2" width="11.6" height="1.7" fill="#2a2b40"/>
 <rect x="1.2" y="11.3" width="11.6" height="1.5" fill="#e2e0c0"/>
</g>
<!-- Cut -->
<g transform="translate(144.5,29)" fill="none" stroke="#5a5a62" stroke-width="1.3">
 <circle cx="2.9" cy="2.6" r="2.2"/><circle cx="2.9" cy="10" r="2.2"/>
 <path d="M4.6 3.8L16 10.4" stroke-width="1.6"/><path d="M4.6 8.8L16 2.2" stroke-width="1.6"/>
</g>
<!-- Copy -->
<g transform="translate(174,30.5)">
 <rect x="0.5" y="0.5" width="8" height="9.5" fill="#fff" stroke="#b9c8c4" stroke-width="0.9"/>
 <path d="M2 3H7M2 5H7M2 7H7" stroke="#c8d4d0" stroke-width="0.8"/>
 <rect x="5.5" y="3.2" width="8" height="9.8" fill="#fff" stroke="#555768" stroke-width="1.1"/>
 <path d="M7.4 6.2H11.6M7.4 8.4H11.6M7.4 10.6H11.6" stroke="#4a4c66" stroke-width="0.8"/>
</g>
<!-- Paste -->
<g transform="translate(202,29)">
 <rect x="0" y="1.6" width="9.4" height="11" rx="0.8" fill="#6b4a33"/>
 <rect x="0" y="8" width="9.4" height="4.6" fill="#4a3122"/>
 <path d="M2.4 2.6Q2.4 0.2 4.7 0.2Q7 0.2 7 2.6Z" fill="#d8d8dc" stroke="#77787f" stroke-width="0.6"/>
 <rect x="5.8" y="5" width="8" height="9.4" fill="#fff" stroke="#555768" stroke-width="1.1"/>
 <path d="M7.7 8H11.9M7.7 10H11.9M7.7 12H11.9" stroke="#4a4c66" stroke-width="0.8"/>
</g>
<!-- Undo -->
<g transform="translate(237.5,28.5)">
 <path d="M6.6 0L0 5.6L6.6 11.2V7.6Q11.4 7.2 11.6 10.6Q11.6 13 8.2 13.6V14.4Q15.4 14 15.4 9.4Q15.2 3.8 6.6 3.8Z" fill="#4b4b58"/>
</g>
<path d="M262 35H267.4L264.7 38.2Z" fill="#111"/>
<!-- Redo -->
<g transform="translate(295.5,28.5) scale(-1,1)">
 <path d="M6.6 0L0 5.6L6.6 11.2V7.6Q11.4 7.2 11.6 10.6Q11.6 13 8.2 13.6V14.4Q15.4 14 15.4 9.4Q15.2 3.8 6.6 3.8Z" fill="#c4c4c8"/>
</g>
<path d="M305 35H310.4L307.7 38.2Z" fill="#b9b9b9"/>
<!-- Search content (purple) -->
<g transform="translate(331,28)">
 <rect width="16" height="15.6" fill="#5b2a8c"/>
 <path d="M14.6 0.2L9.6 5.4 11.6 7 6 13.4 4 11.8 0.6 15.4 6.6 15 5.4 13.6 11 7.6 9 5.8Z" fill="#fff" opacity="0"/>
 <path d="M16 0L8.2 5.2 10.6 7.6 4.6 11.6 3.4 9.8 0.6 15.2 7 14.6 5.6 13 13 8.6 10.4 6Z" fill="#fff"/>
</g>
<!-- Import -->
<g transform="translate(367,29)">
 <path d="M8.4 8.6V3.2L11.4 0.5H15.6V8.6Z" fill="#fff" stroke="#8a8c9c" stroke-width="0.9"/>
 <path d="M0 7.4H7.2L8.6 8.8V14.6H0Z" fill="#343872"/>
 <rect x="1.8" y="7.8" width="4.6" height="2.6" fill="#fff"/><rect x="2.4" y="11.6" width="4" height="3" fill="#1f2250"/><rect x="4" y="12.2" width="1" height="2" fill="#e0e0ea"/>
 <path d="M3 3.6H9.4" stroke="#d21f1f" stroke-width="1.6"/><path d="M8.6 0.9L12.2 3.6 8.6 6.3Z" fill="#d21f1f"/>
</g>
<!-- Export -->
<g transform="translate(395,29)">
 <path d="M0.5 8.4V3.2L3.5 0.5H7.8V8.4Z" fill="#fff" stroke="#8a8c9c" stroke-width="0.9"/>
 <path d="M7.6 7.4H14.8L16.2 8.8V14.6H7.6Z" fill="#343872"/>
 <rect x="9.4" y="7.8" width="4.6" height="2.6" fill="#fff"/><rect x="10" y="11.6" width="4" height="3" fill="#1f2250"/><rect x="11.6" y="12.2" width="1" height="2" fill="#e0e0ea"/>
 <path d="M3.6 4.6H10" stroke="#d21f1f" stroke-width="1.6"/><path d="M9.2 1.9L12.8 4.6 9.2 7.3Z" fill="#d21f1f"/>
</g>
<!-- PDF -->
<g transform="translate(423,29)">
 <path d="M1.4 14.4V0.5H8L11.6 3.8V14.4Z" fill="#fff" stroke="#8a8c9c" stroke-width="0.9"/>
 <path d="M8 0.6V3.8H11.6" fill="none" stroke="#8a8c9c" stroke-width="0.8"/>
 <path d="M0 4.8H12.6V3L16.6 7.6 12.6 12.2V10.6H0Z" fill="#23253f"/>
 <text x="0.8" y="9.9" font-family="Liberation Sans, sans-serif" font-weight="bold" font-size="5.6" fill="#fff" textLength="11">PDF</text>
</g>
<!-- zoom combo chevron -->
<path d="M528.3 34.3L531.6 38.2 534.9 34.3" fill="none" stroke="#333" stroke-width="1.6"/>
<!-- Full-screen preview -->
<g transform="translate(548.5,29.5)">
 <rect x="0.5" y="0.5" width="13.6" height="10.6" rx="1" fill="#9fd6ea" stroke="#4a5568" stroke-width="1"/>
 <path d="M7.3 2V9.6M3 5.8H11.6" stroke="#111" stroke-width="1.1"/>
 <path d="M7.3 1.2L8.9 3H5.7ZM7.3 10.4L8.9 8.6H5.7ZM2.2 5.8L4 4.2V7.4ZM12.4 5.8L10.6 4.2V7.4Z" fill="#111"/>
 <path d="M3.4 13.6H11.2" stroke="#8d96a8" stroke-width="1"/><path d="M7.3 11.2V13.4" stroke="#8d96a8" stroke-width="1.4"/>
</g>
<!-- Rulers toggle icon -->
<g transform="translate(584.5,28.5)">
 <path d="M0 0H15V4.4H4.4V15.4H0Z" fill="#a9b7d8" stroke="#8794b8" stroke-width="0.6"/>
 <path d="M3 0V2M5.4 0V2.6M7.8 0V2M10.2 0V2.6M12.6 0V2M0 5H2M0 7.4H2.6M0 9.8H2M0 12.2H2.6" stroke="#fff" stroke-width="0.8"/>
</g>
<!-- Grid eye -->
<g transform="translate(612.5,28.5)">
 <path d="M2 0V14.6M5.4 0V14.6M8.8 0V8M12.2 0V8M0 2H15M0 5.4H15M0 8.8H8M0 12.2H6" stroke="#a9a6cc" stroke-width="0.9" fill="none"/>
 <path d="M4 11.4Q10 5.6 16 11.4Q10 16.6 4 11.4Z" fill="#fff" stroke="#3a3a44" stroke-width="1.2"/>
 <circle cx="10" cy="11.2" r="2.4" fill="#2c2c34"/>
</g>
<!-- Guidelines eye -->
<g transform="translate(640,28)">
 <path d="M5.6 0V15.6" stroke="#111" stroke-width="1" stroke-dasharray="1.4 1.2"/>
 <path d="M0 5.2H15" stroke="#111" stroke-width="1" stroke-dasharray="1.4 1.2"/>
 <path d="M6 11.4Q11.4 6.6 16.6 11.4Q11.4 15.8 6 11.4Z" fill="#f2f2f2" stroke="#8a8a90" stroke-width="1"/>
 <circle cx="11.4" cy="11.2" r="2.2" fill="#6b6b72"/>
</g>
<path d="M756 35H761.4L758.7 38.2Z" fill="#111"/>
<!-- Welcome screen -->
<g transform="translate(782,29.5)">
 <rect x="0.5" y="0.5" width="14" height="13.4" fill="#e6e7ef" stroke="#5a5c70" stroke-width="1"/>
 <rect x="0.5" y="0.5" width="14" height="2" fill="#8d90a8"/>
 <path d="M2.2 12V6.6H5.4L6.6 5.4H9.2V12Z" fill="#454985"/>
 <path d="M8.2 11.6V6.6L10.2 4.6H12.6V11.6Z" fill="#fff" stroke="#8a8c9c" stroke-width="0.7"/>
</g>
<!-- Options checklist -->
<g transform="translate(812,28.5)" fill="none">
 <path d="M4.6 3H12M4.6 8H12M4.6 13H12" stroke="#7d86a8" stroke-width="1.1"/>
 <path d="M0.4 2.6L1.8 4.2 4.4 0.6M0.4 7.6L1.8 9.2 4.4 5.6M0.4 12.6L1.8 14.2 4.4 10.6" stroke="#4f9a28" stroke-width="1.2"/>
</g>
<!-- App launcher -->
<g transform="translate(847.5,28.5)">
 <rect x="0.4" y="0.4" width="12" height="8.6" fill="#dfe0ea" stroke="#4a4c60" stroke-width="0.8"/>
 <rect x="0" y="0" width="12.8" height="2.8" fill="#1d1f33"/>
 <path d="M6.4 9.4L8.8 13.6 7 13 6.4 15 5.8 13 4 13.6Z" fill="#e8452a"/>
 <path d="M6.4 11L7.4 13.6 6.4 14.8 5.4 13.6Z" fill="#f6b13a"/>
</g>
<path d="M871 35H876.4L873.7 38.2Z" fill="#111"/>

<!-- ===== property bar ===== -->
<!-- object origin -->
<g transform="translate(25,63)" fill="#f4f4f4" stroke="#77798f" stroke-width="0.9">
 <path d="M2 2H14V14H2Z" fill="none" stroke-dasharray="1.4 1" stroke="#6f7188" stroke-width="1"/>
 <rect x="0.5" y="0.5" width="3" height="3"/><rect x="6.5" y="0.5" width="3" height="3"/><rect x="12.5" y="0.5" width="3" height="3"/>
 <rect x="0.5" y="6.5" width="3" height="3"/><rect x="6" y="6" width="4" height="4" fill="#000" stroke="#000"/><rect x="12.5" y="6.5" width="3" height="3"/>
 <rect x="0.5" y="12.5" width="3" height="3"/><rect x="6.5" y="12.5" width="3" height="3"/><rect x="12.5" y="12.5" width="3" height="3"/>
</g>
<!-- width / height icons -->
<g stroke="#3f4270" fill="#3f4270">
 <path d="M165.8 60.6V67.6M177.2 60.6V67.6" stroke-width="1.2"/><path d="M167 64.1H176" stroke-width="1.1"/>
 <path d="M166.6 64.1L169.4 61.9V66.3ZM176.4 64.1L173.6 61.9V66.3Z" stroke="none"/>
 <path d="M168.4 74.8H175.6M168.4 84.8H175.6" stroke-width="1.2"/><path d="M172 76H172V84" stroke-width="1.1"/>
 <path d="M172 75.6L174.2 78.4H169.8ZM172 84L174.2 81.2H169.8Z" stroke="none"/>
</g>
<!-- lock -->
<g transform="translate(336.5,67)">
 <path d="M2 4V2.6Q2 0.5 4 0.5Q6 0.5 6 2.6V4" fill="none" stroke="#3d4078" stroke-width="1.2"/>
 <rect x="0.6" y="3.8" width="6.8" height="5.2" fill="#3d4078"/>
 <rect x="3.5" y="5.4" width="1" height="2" fill="#c9cbe0"/>
</g>
<!-- rotate -->
<g fill="none" stroke="#222" stroke-width="1.3">
 <path d="M365.2 70.4A4.6 4.6 0 1 1 368 76"/>
</g>
<path d="M362.6 72.2L365.2 67.6 367.8 72.2Z" fill="#222"/>
<!-- mirror horizontally -->
<g transform="translate(464,64)" fill="url(#gLav)" stroke="#555768" stroke-width="1.1">
 <path d="M0.6 3.4H3.4V10H5.6V14H0.6Z"/>
 <path d="M14.4 3.4H11.6V10H9.4V14H14.4Z" stroke="#8a8c9c"/>
 <path d="M7.5 0V15" stroke="#111" stroke-dasharray="1.2 1.2" stroke-width="1"/>
</g>
<!-- mirror vertically -->
<g transform="translate(492.5,64)" fill="url(#gLav)" stroke="#555768" stroke-width="1.1">
 <path d="M3.4 0.6V3.4H10V5.6H14V0.6Z" transform="translate(-1,0)"/>
 <path d="M3.4 14.4V11.6H10V9.4H14V14.4Z" transform="translate(-1,0)" stroke="#8a8c9c"/>
 <path d="M0 7.5H15" stroke="#111" stroke-dasharray="1.2 1.2" stroke-width="1"/>
</g>
<!-- pen nib -->
<g transform="translate(529.6,64.3)">
 <path d="M4.6 0.3Q0.2 5.2 1.6 10.6H7.6Q9 5.2 4.6 0.3Z" fill="#fff" stroke="#3a3c50" stroke-width="1"/>
 <path d="M4.6 1.6V6" stroke="#3a3c50" stroke-width="0.8"/><circle cx="4.6" cy="6.6" r="0.9" fill="#3a3c50"/>
 <rect x="0.4" y="11.8" width="8.4" height="1.7" fill="#23253f"/>
</g>
<path d="M611.3 69.8L614.6 73.8 617.9 69.8" fill="none" stroke="#333" stroke-width="1.6"/>
<!-- ungroup -->
<g transform="translate(639,63)">
 <rect x="0.8" y="0.8" width="13" height="13" fill="none" stroke="#111" stroke-width="1.4" stroke-dasharray="1.3 1.2"/>
 <rect x="4" y="3.4" width="4" height="3.6" fill="#e8e9f2" stroke="#6a6c88" stroke-width="0.9"/>
 <rect x="7.4" y="6.6" width="4" height="3.6" fill="#e8e9f2" stroke="#9a9cb8" stroke-width="0.9"/>
 <path d="M6 5V8.6H9" fill="none" stroke="#2f3368" stroke-width="1.1"/>
 <path d="M9.6 10L14.8 15.2M14.8 10L9.6 15.2" stroke="#e0371a" stroke-width="1.7"/>
</g>
<!-- ungroup all -->
<g transform="translate(667,63)">
 <rect x="1.6" y="2.2" width="13" height="13" fill="none" stroke="#b9bcd0" stroke-width="0.9" stroke-dasharray="1 1"/>
 <rect x="3.6" y="5" width="5.2" height="4.6" fill="#eeeff6" stroke="#4a4c68" stroke-width="1.1"/>
 <rect x="7.6" y="8.6" width="5.2" height="4.6" fill="#eeeff6" stroke="#4a4c68" stroke-width="1.1"/>
 <path d="M11.6 0.6L15 4M15 0.6L11.6 4" stroke="#e0371a" stroke-width="1.4"/>
</g>
<!-- wrap text -->
<g transform="translate(704,64)">
 <path d="M0 0.6H14M0 3.4H5M0 6.2H5M0 9H5M0 11.8H5M0 14H14" stroke="#222" stroke-width="1.1"/>
 <rect x="6.4" y="2.6" width="7.6" height="9.6" fill="#c8c9d8" stroke="#2a2b40" stroke-width="1.2"/>
 <rect x="7.8" y="4" width="4.8" height="6.8" fill="#f2f2f6" opacity="0.7"/>
 <path d="M17 12V16.4H12.6Z" fill="#000"/>
</g>
<!-- to front -->
<g transform="translate(739.5,64)">
 <rect x="6" y="6.4" width="7.6" height="6.8" fill="#e3e4ee" stroke="#9a9cb8" stroke-width="0.9"/>
 <rect x="0.6" y="0.6" width="7.4" height="6.6" fill="url(#gLav)" stroke="#3a3c55" stroke-width="1.1"/>
 <path d="M8.2 8.2L12 12M8.2 8.2H11M8.2 8.2V11" stroke="#e0371a" stroke-width="1.3" fill="none"/>
</g>
<!-- to back -->
<g transform="translate(767.5,64)">
 <rect x="0.6" y="0.6" width="7.4" height="6.6" fill="#d9dbe8" stroke="#b4b6cc" stroke-width="0.9"/>
 <rect x="6" y="6.4" width="7.6" height="6.8" fill="#f4f4f8" stroke="#3a3c55" stroke-width="1.1"/>
 <path d="M7.4 7.6L11.4 11.6M11.4 11.6H8.6M11.4 11.6V8.8" stroke="#e0371a" stroke-width="1.3" fill="none"/>
</g>
<!-- quick customise -->
<circle cx="818" cy="71.8" r="7.8" fill="none" stroke="#c2c2c2" stroke-width="1.5"/>
<path d="M813.2 71.8H822.8M818 67V76.6" stroke="#c2c2c2" stroke-width="2"/>
<!-- tab plus -->
<path d="M852 101H862M857 96V106" stroke="#b0b0b0" stroke-width="1.6"/>
</svg>
<!-- toolbox -->
<div class="box" style="left:23px;top:95px;width:23px;height:23px;border-color:#b9b9b9;"></div>
<div class="hsep" style="left:23px;top:152px;width:22px;"></div>
<div class="hsep" style="left:23px;top:216px;width:22px;"></div>
<div class="hsep" style="left:23px;top:364px;width:22px;"></div>
<div class="hsep" style="left:23px;top:400px;width:22px;"></div>
<div class="hsep" style="left:23px;top:464px;width:22px;"></div>
<div class="hsep" style="left:23px;top:528px;width:22px;"></div>
<div class="hsep" style="left:23px;top:620px;width:22px;"></div>
<!-- left strip separators -->
<div class="hsep" style="left:7px;top:198px;width:12px;"></div>
<div class="hsep" style="left:7px;top:234px;width:12px;"></div>
<div class="hsep" style="left:7px;top:298px;width:12px;"></div>
<div class="hsep" style="left:7px;top:362px;width:12px;"></div>
<div class="hsep" style="left:7px;top:454px;width:12px;"></div>
<div class="hsep" style="left:7px;top:50px;width:12px;"></div>
<svg width="70" height="700" style="left:0;top:0" viewBox="0 0 70 700">
<defs>
<linearGradient id="gLav2" x1="0" y1="0" x2="0" y2="1"><stop offset="0" stop-color="#fff"/><stop offset="0.5" stop-color="#fff"/><stop offset="0.55" stop-color="#d4d5e2"/><stop offset="1" stop-color="#c4c6d8"/></linearGradient>
<linearGradient id="gOr" x1="0" y1="0" x2="0" y2="1"><stop offset="0" stop-color="#fbe6b0"/><stop offset="1" stop-color="#e8941a"/></linearGradient>
<linearGradient id="gNv" x1="0" y1="0" x2="0" y2="1"><stop offset="0" stop-color="#9a9cb8"/><stop offset="1" stop-color="#23264f"/></linearGradient>
<clipPath id="cpL"><rect x="3" y="0" width="16" height="700"/></clipPath>
</defs>
<!-- flyout triangles -->
<g fill="#000">
<path d="M44.5 111.5V116.6H39.2Z"/><path d="M44.5 139V144.2H39.2Z"/><path d="M44.5 175V180.2H39.2Z"/><path d="M44.5 203V208.2H39.2Z"/>
<path d="M44.5 239V244.2H39.2Z"/><path d="M44.5 296V301.2H39.2Z"/><path d="M44.5 323.5V328.7H39.2Z"/><path d="M44.5 350.8V356H39.2Z"/>
<path d="M44.5 387V392.2H39.2Z"/><path d="M44.5 423V428.2H39.2Z"/><path d="M44.5 451V456.2H39.2Z"/><path d="M44.5 487V492.2H39.2Z"/>
<path d="M44.5 551V556.2H39.2Z"/><path d="M44.5 580V585.2H39.2Z"/>
</g>
<!-- pick -->
<path d="M30.8 98.6V110.2L33.6 107.6 35.6 112.4 37.6 111.6 35.6 107 39 106.8Z" fill="#fff" stroke="#55566b" stroke-width="1.1" stroke-linejoin="round"/>
<!-- shape -->
<path d="M32.2 126.4Q28 134 31.4 141.4" fill="none" stroke="#55566b" stroke-width="1.1"/>
<rect x="28.3" y="130.6" width="3" height="3" fill="#fff" stroke="#333" stroke-width="0.9"/>
<path d="M33 134L41 136.2 36.6 141.6Z" fill="#2a2a30"/>
<!-- crop -->
<g stroke="#3a3c5e" stroke-width="1.6" fill="none"><path d="M31.4 163.6V174H41.6"/><path d="M27.6 167.2H38V177"/></g>
<path d="M40.6 164.4L30 175" stroke="#3a3c5e" stroke-width="0.9"/>
<!-- zoom -->
<circle cx="32.2" cy="196.8" r="5.6" fill="url(#gLav2)" stroke="#55566b" stroke-width="1.1"/>
<path d="M36.4 201L41.8 206.2" stroke="#2a2a30" stroke-width="2"/>
<!-- freehand -->
<path d="M30 238L38.4 229.6" stroke="#55566b" stroke-width="1.1"/>
<rect x="27.8" y="237" width="3" height="3" fill="#fff" stroke="#333" stroke-width="0.9"/><rect x="37.6" y="227.4" width="3" height="3" fill="#fff" stroke="#333" stroke-width="0.9"/>
<!-- artistic media -->
<path d="M28.4 261.6Q29 257.6 32 258.4Q34.6 259.6 33.6 263Q33.4 266.8 37.2 266.4Q41 265.4 39.6 261Q37.4 259.4 36.6 262" fill="none" stroke="#33343f" stroke-width="2" stroke-linecap="round"/>
<!-- rectangle -->
<rect x="28.7" y="285.5" width="11" height="11" fill="url(#gLav2)" stroke="#55566b" stroke-width="1.1"/>
<!-- ellipse -->
<circle cx="33.9" cy="319" r="5.8" fill="url(#gLav2)" stroke="#55566b" stroke-width="1.1"/>
<!-- polygon -->
<path d="M27 347L30.4 340.8H37.4L40.8 347 37.4 353.2H30.4Z" fill="url(#gLav2)" stroke="#55566b" stroke-width="1.1"/>
<!-- text -->
<text x="34" y="389" text-anchor="middle" font-family="Liberation Sans, sans-serif" font-weight="bold" font-size="18" fill="#eceef4" stroke="#6a6c80" stroke-width="1">A</text>
<!-- dimension -->
<path d="M29.8 421.4L38.6 414" stroke="#222" stroke-width="1.2"/><path d="M27.6 418.4L32 424.6M36.4 411L40.8 417" stroke="#222" stroke-width="1.4"/>
<path d="M29.6 421.6L32.6 420.8 31 418.6ZM38.8 413.8L35.8 414.6 37.4 416.8Z" fill="#222"/>
<!-- connector -->
<path d="M31.6 440.4L36.8 451.6" stroke="#2f3368" stroke-width="1"/>
<rect x="29.4" y="438.2" width="4.4" height="4.4" fill="#ef7d1a" stroke="#c85f0a" stroke-width="0.6"/><rect x="34.6" y="449.4" width="4.4" height="4.4" fill="#ef7d1a" stroke="#c85f0a" stroke-width="0.6"/>
<!-- drop shadow -->
<rect x="29.4" y="480" width="10" height="9" fill="#6e7090" opacity="0.85"/>
<rect x="27.2" y="477.8" width="10" height="9" fill="url(#gLav2)" stroke="#4a4c66" stroke-width="1.1"/>
<!-- transparency -->
<path d="M26.6 513.4L29.8 517.4M28.2 515.4L33.4 510" stroke="#8a8ca6" stroke-width="1"/>
<path d="M32.4 503L39 508.6Q36 512.4 32.6 510.6Q29.8 507.6 32.4 503Z" fill="#e8e9f2" stroke="#3d4078" stroke-width="1"/>
<path d="M31.2 507L37.6 510.2Q34.6 512 32.6 510.6Z" fill="#3d4078"/>
<path d="M38.6 510.4L42.6 517.8H34.6Z" fill="url(#gNv)"/>
<!-- eyedropper -->
<rect x="25.8" y="546.4" width="8.4" height="7.6" fill="#ef7d1a"/><path d="M30 546.4V554M25.8 550.4H34.2" stroke="#fbd9b0" stroke-width="0.8"/>
<path d="M33 548L38.4 542" stroke="#6a6c88" stroke-width="1.8"/><path d="M36.4 543.4L41.8 537.8" stroke="#23253f" stroke-width="3.4" stroke-linecap="round"/><path d="M36 540.6L40 544.6" stroke="#23253f" stroke-width="1.6"/>
<!-- interactive fill -->
<path d="M29.4 571.6L33.6 567.6 38.4 572.4 33.4 576.6Z" fill="#fff" stroke="#3a3c5e" stroke-width="1"/>
<path d="M30.4 572.4L37.2 572.2 33.4 575.6Z" fill="#ef7d1a"/>
<path d="M31.6 569.4Q31 566.6 33.2 566.4" fill="none" stroke="#3a3c5e" stroke-width="1"/>
<path d="M36 574.2L40.4 582H31.8Z" fill="url(#gOr)"/>
<!-- smart fill -->
<path d="M27.6 598.4L31.8 594.4 36.6 599.2 31.6 603.4Z" fill="#fff" stroke="#3a3c5e" stroke-width="1"/>
<path d="M28.6 599.2L35.4 599 31.6 602.4Z" fill="#ef7d1a"/>
<path d="M29.8 596.2Q29.2 593.4 31.4 593.2" fill="none" stroke="#3a3c5e" stroke-width="1"/>
<rect x="33.2" y="603.2" width="7" height="5.4" fill="none" stroke="#3a3c5e" stroke-width="1"/><rect x="35.6" y="605.6" width="6.4" height="5.4" fill="#f0c9a8" stroke="#3a3c5e" stroke-width="1"/>
<!-- quick customise -->
<circle cx="33.9" cy="644.8" r="7.8" fill="none" stroke="#c2c2c2" stroke-width="1.5"/>
<path d="M29.1 644.8H38.7M33.9 640V649.6" stroke="#c2c2c2" stroke-width="2"/>

<!-- partially hidden icons from window behind (clipped) -->
<g clip-path="url(#cpL)">
 <rect x="11" y="0" width="8" height="4" fill="#55566b"/>
 <path d="M17 2L19 9H14Z" fill="#55566b"/>
 <circle cx="17.2" cy="31.3" r="6.1" fill="url(#gLav2)" stroke="#55566b" stroke-width="1.1"/>
 <path d="M12.6 73.4L18.6 67.4" stroke="#55566b" stroke-width="1.1"/><rect x="11" y="72" width="2.8" height="2.8" fill="#fff" stroke="#333" stroke-width="0.8"/>
 <path d="M11.4 94.2Q16.4 92 18 98" fill="none" stroke="#55566b" stroke-width="1.4"/>
 <rect x="12.6" y="119.6" width="12" height="11" fill="url(#gLav2)" stroke="#55566b" stroke-width="1.1"/>
 <circle cx="19.4" cy="153" r="5.8" fill="url(#gLav2)" stroke="#55566b" stroke-width="1.1"/>
 <path d="M11.6 181.4L15 175.8H22V187H15Z" fill="url(#gLav2)" stroke="#55566b" stroke-width="1.1"/>
 <text x="19" y="223.6" text-anchor="middle" font-family="Liberation Sans, sans-serif" font-weight="bold" font-style="italic" font-size="18" fill="#eceef4" stroke="#6a6c80" stroke-width="1">A</text>
 <path d="M11.6 258.6L18.6 251.6M11.4 254L16 258.4" stroke="#222" stroke-width="1.4"/>
 <rect x="13.4" y="272" width="4.4" height="4.4" fill="#ef7d1a" stroke="#c85f0a" stroke-width="0.6"/><path d="M15.4 276.4L18.4 281.6V288" stroke="#2f3368" stroke-width="1" fill="none" stroke-dasharray="5 1.4"/>
 <rect x="13.6" y="313.6" width="10" height="9" fill="#6e7090" opacity="0.85"/><rect x="11.6" y="311.4" width="10" height="9" fill="url(#gLav2)" stroke="#4a4c66" stroke-width="1.1"/>
 <path d="M11.4 343.6L14.6 347.6M13 345.6L18 340.4" stroke="#8a8ca6" stroke-width="1"/><path d="M17 336.4L22 340Q20 343 17.4 341.4Q15.4 339 17 336.4Z" fill="#e8e9f2" stroke="#3d4078" stroke-width="1"/>
 <rect x="10" y="380" width="8.4" height="7.6" fill="#ef7d1a"/><path d="M14.2 380V387.6M10 383.8H18.4" stroke="#fbd9b0" stroke-width="0.8"/><path d="M16 382L20 377" stroke="#55566b" stroke-width="1.8"/>
 <path d="M12.4 405.6L15.8 402.2 19.8 406.2 15.6 409.8Z" fill="#fff" stroke="#3a3c5e" stroke-width="1"/><path d="M13.2 406.4L18.8 406.2 15.6 409Z" fill="#ef7d1a"/><path d="M17.2 411L19.6 415.6H15Z" fill="url(#gOr)"/>
 <path d="M10.4 432.6L13.8 429.2 17.8 433.2 13.6 436.8Z" fill="#fff" stroke="#3a3c5e" stroke-width="1"/><path d="M11.2 433.4L16.8 433.2 13.6 436Z" fill="#ef7d1a"/><path d="M15.6 437.6V442.4H20" fill="none" stroke="#3a3c5e" stroke-width="1"/>
 <circle cx="19.6" cy="478.8" r="7.7" fill="none" stroke="#c6c6c6" stroke-width="1.2"/><path d="M15 478.8H24M19.6 474.4V483.2" stroke="#c6c6c6" stroke-width="1.6"/>
</g>
<!-- ruler origin cross-hair -->
<g stroke="#111" stroke-width="1" fill="none">
 <path d="M56 122.5H66" stroke-dasharray="1.6 1.6"/><path d="M59.5 117V128" stroke-dasharray="1.6 1.6"/>
 <path d="M59.8 122.8L64.2 127.2"/><path d="M64.6 124.4V127.6H61.4"/>
</g>
</svg>
<!-- page tab -->
<svg width="1680" height="80" style="left:0;top:912px" viewBox="0 912 1680 80">
<path d="M225.5 936V918.5H291.6L299.6 926V936Z" fill="#fff" stroke="#a9a9a9" stroke-width="1"/>
<rect x="226" y="934.6" width="73.1" height="2" fill="#fff"/>
<!-- add page icons -->
<g id="addpg" fill="none" stroke="#111" stroke-width="1.2">
 <path d="M71.6 931.6V920.6H76.6L79.6 923.6V931.6Z" fill="#fff"/><path d="M76.4 920.8V923.8H79.4" stroke-width="0.9"/>
 <path d="M75.6 924.6V930M72.9 927.3H78.3" stroke-width="1.3"/>
</g>
<g fill="none" stroke="#111" stroke-width="1.2" transform="translate(140,0)">
 <path d="M71.6 931.6V920.6H76.6L79.6 923.6V931.6Z" fill="#fff"/><path d="M76.4 920.8V923.8H79.4" stroke-width="0.9"/>
 <path d="M75.6 924.6V930M72.9 927.3H78.3" stroke-width="1.3"/>
</g>
<!-- nav arrows -->
<g fill="#8a8a8a">
 <rect x="89" y="922.4" width="1.6" height="8.4"/><path d="M96.4 922.4V930.8L91 926.6Z"/>
 <path d="M113.2 922.4V930.8L107.8 926.6Z"/>
 <path d="M179.8 922.4V930.8L185.2 926.6Z"/>
 <path d="M194.8 922.4V930.8L200.2 926.6Z"/><rect x="200.6" y="922.4" width="1.6" height="8.4"/>
</g>
<!-- nav splitter grip -->
<g fill="#b5b5b5"><rect x="869" y="922" width="1.4" height="1.4"/><rect x="869" y="925.4" width="1.4" height="1.4"/><rect x="869" y="928.8" width="1.4" height="1.4"/><rect x="869" y="932.2" width="1.4" height="1.4"/></g>
<!-- scrollbar arrows -->
<path d="M886.4 922.6L881.8 926.6 886.4 930.6" fill="none" stroke="#444" stroke-width="1.8"/>
<path d="M1651.4 922.6L1656 926.6 1651.4 930.6" fill="none" stroke="#444" stroke-width="1.8"/>
<!-- navigator zoom icon -->
<circle cx="1670" cy="925.4" r="4.6" fill="#fff" stroke="#333" stroke-width="1.2"/>
<circle cx="1670" cy="925.4" r="1.8" fill="none" stroke="#555" stroke-width="0.9"/>
<path d="M1670 920.4V930.4M1665 925.4H1675" stroke="#555" stroke-width="0.6"/>
<path d="M1673.4 929L1677.8 933.4" stroke="#222" stroke-width="2"/>
<!-- palette row -->
<g fill="#c4c4c4"><rect x="53.4" y="941" width="1.6" height="1.6"/><rect x="53.4" y="945" width="1.6" height="1.6"/><rect x="53.4" y="949" width="1.6" height="1.6"/></g>
<path d="M61 941.2V950.2L66.4 945.7Z" fill="#000"/>
<path d="M73.6 951.6L75 947.4 80 942.4 82.6 945 77.6 950Z" fill="#8fa4a8" stroke="#59606e" stroke-width="0.6"/>
<path d="M79 942.6L83 946.6" stroke="#23253f" stroke-width="1.6"/><path d="M81.4 943.6L83.8 941.2" stroke="#23253f" stroke-width="3.4" stroke-linecap="round"/>
<path d="M95.8 942L91.8 945.8 95.8 949.6" fill="none" stroke="#d0d0d0" stroke-width="1.4"/>
<rect x="102.5" y="937.5" width="17" height="17" fill="#fff" stroke="#555" stroke-width="1"/>
<path d="M103 938L119 954M119 938L103 954" stroke="#222" stroke-width="0.9"/>
<rect x="119.5" y="937" width="17.5" height="18" fill="#e1251b"/>
<path d="M1646.4 941.2L1650.8 946 1646.4 950.8" fill="none" stroke="#d0d0d0" stroke-width="1.3"/>
<path d="M1662 942.6L1665 945.8 1662 949M1665.6 942.6L1668.6 945.8 1665.6 949" fill="none" stroke="#c9c9c9" stroke-width="1"/>
<!-- status bar -->
<rect x="145.5" y="965.5" width="13" height="13" fill="#fff" stroke="#111" stroke-width="1.2"/>
<path d="M150 967.8V976.2L155.2 972Z" fill="#000"/>
<!-- color proof -->
<g transform="translate(1245.5,965.5)">
 <rect x="0.5" y="0.5" width="13.6" height="10.8" rx="1.2" fill="#8d96c4" stroke="#6a73a8" stroke-width="0.8"/>
 <rect x="1.6" y="1.6" width="11.4" height="8.6" fill="#c4d8c8"/>
 <rect x="1.6" y="1.6" width="11.4" height="2.2" fill="#d88a8a"/><rect x="1.6" y="8" width="11.4" height="2.2" fill="#8ab0d8"/>
 <circle cx="7.3" cy="5.9" r="3.2" fill="#fff" stroke="#222" stroke-width="1.1"/><circle cx="7.3" cy="5.9" r="1.1" fill="#fff" stroke="#222" stroke-width="0.8"/>
 <path d="M3 13.6H11.6" stroke="#8d96c4" stroke-width="1.2"/>
</g>
<!-- fill bucket -->
<g transform="translate(1274,964.5)">
 <path d="M0.6 8.6L7 2.2 13 8.2 6.4 14.4Z" fill="#fff" stroke="#3a3c5e" stroke-width="1.1"/>
 <path d="M1.6 9.2L12 9 6.4 13.6Z" fill="#ef7d1a"/>
 <path d="M5 4.4Q4 0.6 7 0.4" fill="none" stroke="#3a3c5e" stroke-width="1.1"/>
 <path d="M12.4 8Q14.8 9 14.4 14" fill="none" stroke="#ef9d3a" stroke-width="1.6"/>
</g>
<rect x="1295.5" y="964" width="16.6" height="16.6" fill="#fff" stroke="#333" stroke-width="1"/>
<path d="M1296 964.5L1311.6 980.1M1311.6 964.5L1296 980.1" stroke="#111" stroke-width="1"/>
<rect x="1477" y="962" width="1" height="20.5" fill="#d5d5d5"/>
<!-- pen nib -->
<g transform="translate(1486.8,965.3)">
 <path d="M4.2 0.2Q0 5 1.2 11H7.2Q8.4 5 4.2 0.2Z" fill="#fff" stroke="#3a3c50" stroke-width="1"/>
 <path d="M4.2 1.6V6.4" stroke="#3a3c50" stroke-width="0.8"/><circle cx="4.2" cy="7" r="0.9" fill="#3a3c50"/>
 <rect x="0.2" y="12.4" width="8" height="1.8" fill="#23253f"/>
</g>
<rect x="1504.5" y="963.5" width="17" height="17" fill="#e1251b" stroke="#c9c9c9" stroke-width="0.6"/>
</svg>
<!-- vertical scrollbar arrows -->
<svg width="17" height="790" style="left:1663px;top:131px" viewBox="0 0 17 790">
<path d="M4.2 11L8.4 6.4 12.6 11" fill="none" stroke="#444" stroke-width="1.8"/>
<path d="M4.2 776L8.4 780.6 12.6 776" fill="none" stroke="#444" stroke-width="1.8"/>
</svg>
<!-- page nav text -->
<div class="t" style="letter-spacing:-0.5px;word-spacing:-1px;left:135px;top:921px;">1 z 1</div>
<div class="t" style="letter-spacing:-0.43px;left:240px;top:919px;">Strona 1</div>
</body>
</html>
